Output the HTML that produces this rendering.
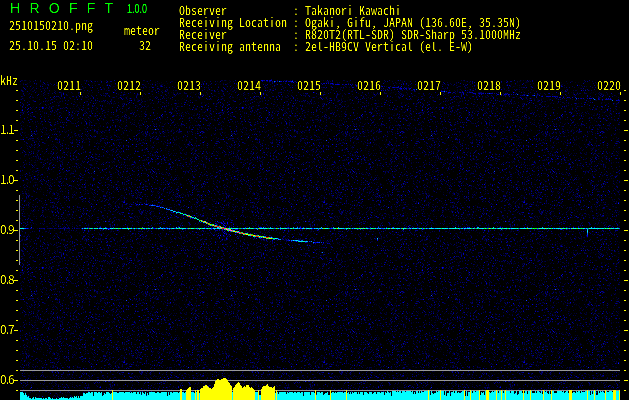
<!DOCTYPE html>
<html><head><meta charset="utf-8"><title>HROFFT 1.0.0</title>
<style>
html,body{margin:0;padding:0;background:#000;overflow:hidden}
#w{position:relative;will-change:transform;width:629px;height:400px;background:#000;overflow:hidden}
.t{position:absolute;white-space:pre;color:#ff0;font:12px/12px "Noto Sans CJK JP",IPAGothic,"Liberation Mono",monospace;font-feature-settings:"hwid";height:12px;-webkit-text-stroke:0}
#tx{position:absolute;left:0;top:0;width:629px;height:400px;filter:url(#cr)}
.f{position:absolute;white-space:pre;color:#ff0;font:12px/12px "Noto Sans CJK JP","Liberation Sans",sans-serif;letter-spacing:-1px;height:12px}
.g{position:absolute;white-space:pre;color:#0f0;font:14px/16px "Liberation Sans",sans-serif;word-spacing:5.4px}
.v{position:absolute;white-space:pre;color:#0f0;font:12.5px/12px "Liberation Sans",sans-serif;transform:scaleX(.72);transform-origin:0 0;-webkit-text-stroke:.35px #0f0}
</style></head><body><div id="w">
<svg width="0" height="0" style="position:absolute"><filter id="cr" x="0" y="0" width="100%" height="100%" color-interpolation-filters="sRGB"><feComponentTransfer><feFuncA type="linear" slope="2" intercept="-.65"/></feComponentTransfer></filter></svg>
<svg width="629" height="400" viewBox="0 0 629 400" shape-rendering="crispEdges" style="position:absolute;left:0;top:0">
<defs><pattern id="nz" x="20" y="80" width="200" height="160" patternUnits="userSpaceOnUse"><g fill="none" stroke-width="1"><path stroke="#000050" d="M1 0.5h1M20 0.5h1M100 0.5h1M123 0.5h1M20 1.5h1M66 1.5h1M128 3.5h1M173 3.5h1M3 4.5h1M6 4.5h1M16 4.5h1M27 4.5h1M87 4.5h1M110 4.5h1M123 4.5h1M190 4.5h1M45 5.5h1M105 5.5h1M135 5.5h1M140 5.5h1M144 5.5h1M52 6.5h1M54 6.5h1M125 6.5h1M137 6.5h1M152 6.5h1M13 7.5h1M45 7.5h1M47 7.5h1M65 7.5h1M70 7.5h1M12 8.5h1M23 8.5h1M25 8.5h1M63 8.5h1M77 8.5h1M88 8.5h1M161 8.5h1M133 9.5h1M24 10.5h1M52 10.5h1M64 10.5h1M78 10.5h1M171 10.5h1M191 10.5h2M3 11.5h1M35 11.5h1M49 11.5h1M132 11.5h1M141 11.5h1M195 11.5h1M198 11.5h1M94 12.5h1M179 12.5h1M9 13.5h1M86 13.5h1M148 13.5h1M159 13.5h2M165 13.5h2M3 14.5h1M11 14.5h1M80 14.5h1M125 14.5h1M132 14.5h1M156 14.5h1M175 14.5h1M23 15.5h1M71 15.5h1M83 15.5h1M103 15.5h1M146 15.5h1M194 15.5h1M56 16.5h1M68 16.5h1M178 16.5h1M94 17.5h1M106 17.5h1M172 17.5h1M34 18.5h1M44 18.5h1M70 18.5h1M19 19.5h1M32 19.5h1M54 19.5h1M75 19.5h1M91 19.5h1M13 20.5h1M114 20.5h1M170 20.5h1M40 21.5h1M67 21.5h1M81 21.5h1M125 21.5h1M111 22.5h1M138 22.5h1M142 22.5h1M164 22.5h1M87 23.5h1M89 23.5h1M133 23.5h1M151 24.5h1M196 24.5h1M3 25.5h1M39 25.5h1M57 25.5h1M155 25.5h1M29 26.5h1M73 26.5h1M162 26.5h1M109 27.5h1M121 27.5h1M11 28.5h1M23 28.5h1M28 28.5h1M42 28.5h1M50 28.5h1M152 28.5h1M10 29.5h1M99 29.5h1M57 31.5h1M71 31.5h1M88 31.5h1M100 31.5h1M121 31.5h1M144 31.5h1M156 31.5h1M0 32.5h1M3 32.5h1M112 32.5h1M151 32.5h1M162 32.5h1M24 33.5h1M65 33.5h1M67 33.5h1M79 33.5h1M168 33.5h1M30 34.5h1M146 34.5h1M34 35.5h1M52 35.5h1M69 35.5h1M75 35.5h1M104 35.5h1M116 35.5h1M134 35.5h1M154 35.5h1M186 35.5h1M28 36.5h1M51 36.5h1M75 36.5h1M163 36.5h1M194 36.5h1M0 37.5h1M7 37.5h1M60 37.5h1M98 37.5h1M105 37.5h1M169 37.5h1M58 38.5h1M109 38.5h1M140 38.5h1M169 38.5h1M184 38.5h1M66 39.5h1M100 39.5h1M154 39.5h1M185 39.5h1M194 39.5h1M49 40.5h1M69 40.5h1M93 40.5h1M106 40.5h1M119 40.5h1M138 40.5h1M2 41.5h1M22 41.5h1M153 41.5h1M176 41.5h1M3 42.5h1M44 42.5h1M69 42.5h1M87 42.5h1M140 42.5h1M153 42.5h1M199 42.5h1M37 43.5h1M61 43.5h1M118 43.5h1M133 43.5h1M151 43.5h1M166 43.5h1M34 44.5h1M114 44.5h1M144 44.5h1M1 45.5h1M30 45.5h1M72 45.5h1M119 45.5h1M175 45.5h1M9 46.5h1M87 46.5h1M105 46.5h1M142 46.5h1M119 47.5h1M169 47.5h1M195 47.5h1M26 48.5h1M102 48.5h1M105 48.5h1M137 48.5h1M1 49.5h1M22 49.5h1M74 49.5h1M126 49.5h1M136 49.5h1M26 50.5h1M48 50.5h1M104 50.5h1M151 50.5h1M157 50.5h1M159 50.5h1M21 51.5h1M76 51.5h1M125 51.5h1M142 51.5h1M183 51.5h1M51 52.5h1M89 52.5h1M103 52.5h1M142 52.5h1M144 52.5h1M158 52.5h2M172 52.5h1M184 52.5h1M0 53.5h1M68 53.5h1M143 53.5h1M0 54.5h1M55 55.5h1M66 55.5h1M139 55.5h1M10 56.5h1M28 56.5h1M37 56.5h1M67 56.5h1M74 56.5h1M114 56.5h1M44 57.5h1M135 57.5h1M9 58.5h1M61 58.5h1M153 58.5h1M21 59.5h1M36 59.5h1M69 59.5h1M80 59.5h1M87 59.5h1M97 59.5h1M136 59.5h1M166 59.5h1M171 59.5h1M12 60.5h1M43 60.5h1M63 60.5h1M94 60.5h1M96 60.5h1M112 60.5h1M180 60.5h1M99 62.5h1M123 62.5h1M145 62.5h1M18 63.5h1M42 63.5h1M87 63.5h1M180 63.5h1M197 63.5h1M118 64.5h1M164 64.5h1M14 65.5h1M100 65.5h1M121 65.5h1M134 65.5h1M35 66.5h1M176 66.5h1M187 67.5h1M0 68.5h1M7 68.5h1M93 69.5h1M122 69.5h1M163 69.5h1M56 70.5h1M87 70.5h1M91 70.5h1M162 70.5h1M171 70.5h1M175 70.5h1M18 71.5h1M193 71.5h1M63 72.5h1M65 72.5h1M95 72.5h1M160 72.5h1M186 72.5h1M30 73.5h1M53 73.5h1M148 73.5h1M161 73.5h1M175 73.5h1M10 74.5h1M89 74.5h1M92 75.5h1M153 75.5h1M18 76.5h1M42 76.5h1M56 76.5h1M78 76.5h1M136 76.5h1M30 77.5h1M97 77.5h1M112 77.5h1M127 77.5h1M172 77.5h1M9 78.5h1M37 78.5h1M103 78.5h1M143 78.5h1M166 78.5h1M170 78.5h1M178 78.5h1M20 79.5h1M27 79.5h1M53 79.5h1M94 79.5h1M105 79.5h1M128 79.5h1M186 79.5h1M30 80.5h1M51 80.5h1M70 80.5h1M144 80.5h2M158 80.5h1M181 80.5h1M41 81.5h1M62 81.5h1M93 81.5h1M135 81.5h1M42 82.5h1M99 82.5h1M139 82.5h1M165 82.5h1M29 83.5h1M115 83.5h1M123 83.5h1M69 84.5h2M103 84.5h1M148 84.5h1M157 84.5h1M169 84.5h1M71 85.5h1M89 85.5h1M94 85.5h1M157 85.5h1M183 85.5h1M23 86.5h1M41 86.5h1M124 86.5h1M174 86.5h1M183 86.5h1M34 87.5h1M105 87.5h1M120 87.5h1M152 87.5h1M26 88.5h1M161 88.5h1M31 89.5h1M96 89.5h1M126 89.5h1M155 89.5h1M175 89.5h1M184 89.5h1M55 90.5h1M97 90.5h1M169 90.5h1M15 91.5h1M89 91.5h1M113 91.5h2M165 91.5h1M168 91.5h1M18 92.5h1M40 92.5h1M89 92.5h1M95 92.5h1M197 92.5h1M52 93.5h1M141 93.5h1M190 93.5h1M5 94.5h1M61 94.5h1M142 94.5h1M9 95.5h1M20 95.5h1M77 95.5h1M117 95.5h1M148 95.5h1M71 96.5h1M119 96.5h1M127 96.5h1M131 96.5h1M190 96.5h1M195 96.5h1M100 97.5h1M105 97.5h1M141 97.5h1M162 97.5h1M11 98.5h1M41 98.5h1M87 98.5h1M133 98.5h1M21 99.5h1M40 99.5h1M60 99.5h1M74 99.5h1M88 99.5h1M107 99.5h1M135 99.5h1M188 99.5h1M52 100.5h1M54 100.5h1M91 100.5h1M109 100.5h1M116 100.5h1M169 101.5h1M178 101.5h1M193 101.5h1M10 102.5h1M34 102.5h1M141 102.5h1M151 102.5h1M199 102.5h1M25 103.5h1M65 103.5h1M137 103.5h1M147 103.5h1M4 104.5h1M72 104.5h1M88 104.5h1M104 104.5h1M106 104.5h1M115 104.5h1M141 104.5h1M160 104.5h1M178 104.5h1M6 105.5h1M91 105.5h1M0 106.5h1M13 106.5h1M29 106.5h1M77 106.5h1M112 106.5h1M123 106.5h1M125 106.5h3M184 106.5h1M197 106.5h1M55 107.5h1M93 107.5h1M96 107.5h1M99 107.5h1M123 107.5h1M139 107.5h1M45 108.5h1M56 108.5h1M60 108.5h1M135 108.5h1M157 108.5h1M194 108.5h1M6 109.5h1M17 109.5h1M19 109.5h1M176 109.5h1M108 110.5h1M143 110.5h1M152 110.5h1M5 111.5h1M82 111.5h2M87 111.5h1M151 111.5h1M179 111.5h1M198 111.5h1M16 112.5h1M36 112.5h1M56 112.5h1M105 112.5h1M120 112.5h1M139 112.5h1M150 112.5h1M158 112.5h1M187 112.5h1M2 113.5h1M5 113.5h1M48 113.5h1M65 113.5h1M113 113.5h1M191 113.5h1M52 114.5h1M73 114.5h1M109 114.5h1M120 114.5h1M132 114.5h1M182 114.5h1M7 115.5h1M84 115.5h1M101 115.5h1M165 115.5h1M171 115.5h1M139 116.5h1M168 116.5h1M80 117.5h1M104 117.5h1M117 117.5h1M119 117.5h1M135 117.5h1M39 118.5h1M106 118.5h1M174 118.5h1M10 119.5h1M79 119.5h1M194 119.5h1M199 119.5h1M82 120.5h1M177 120.5h1M21 121.5h1M65 121.5h1M84 121.5h1M93 121.5h1M102 121.5h1M126 121.5h1M196 121.5h1M8 122.5h1M25 122.5h1M31 122.5h1M87 122.5h1M95 122.5h1M183 122.5h1M185 122.5h1M9 123.5h1M40 123.5h1M107 123.5h1M126 123.5h1M128 123.5h1M6 124.5h1M24 124.5h1M36 124.5h1M72 124.5h1M89 124.5h1M102 124.5h1M109 124.5h1M112 124.5h1M137 124.5h1M6 125.5h1M95 125.5h1M102 125.5h1M118 125.5h1M159 125.5h1M0 126.5h1M12 126.5h1M17 126.5h1M57 126.5h1M90 126.5h1M98 126.5h1M102 126.5h1M175 126.5h1M186 126.5h1M193 126.5h1M13 127.5h1M23 127.5h1M33 127.5h1M48 127.5h1M59 127.5h1M99 127.5h1M131 127.5h1M142 127.5h1M147 127.5h1M149 127.5h1M22 128.5h1M39 128.5h1M53 128.5h1M171 128.5h1M3 129.5h1M163 129.5h1M176 129.5h1M37 130.5h1M118 130.5h1M154 130.5h1M182 130.5h1M197 130.5h1M60 131.5h1M80 131.5h1M122 131.5h1M97 132.5h1M101 132.5h1M119 132.5h1M121 132.5h1M139 132.5h1M121 133.5h1M129 133.5h1M22 134.5h1M111 134.5h1M159 134.5h1M198 134.5h1M56 135.5h1M134 135.5h1M172 135.5h2M133 136.5h1M155 136.5h1M177 136.5h1M181 136.5h3M52 137.5h1M60 137.5h1M94 137.5h2M124 137.5h1M130 137.5h1M163 137.5h1M169 137.5h1M16 138.5h1M64 138.5h1M69 138.5h1M93 138.5h1M113 138.5h1M137 138.5h1M139 138.5h1M187 138.5h1M81 139.5h1M96 139.5h1M105 139.5h1M186 139.5h1M195 139.5h1M31 140.5h1M43 140.5h1M49 140.5h1M60 140.5h1M106 140.5h1M179 140.5h1M36 141.5h1M83 141.5h1M93 141.5h1M117 141.5h1M157 141.5h1M10 142.5h1M127 142.5h1M181 142.5h1M13 143.5h1M29 143.5h1M35 143.5h1M183 143.5h1M36 144.5h1M141 144.5h1M11 145.5h1M35 145.5h1M38 145.5h1M47 145.5h1M68 145.5h1M90 145.5h1M5 146.5h1M40 146.5h1M44 146.5h1M52 146.5h1M57 146.5h1M107 146.5h1M139 146.5h1M149 146.5h1M153 146.5h1M86 147.5h1M161 147.5h1M31 148.5h2M38 148.5h1M100 148.5h1M103 148.5h1M156 148.5h1M24 149.5h1M62 149.5h1M82 149.5h1M118 149.5h1M147 149.5h1M163 149.5h1M168 149.5h1M56 150.5h1M82 150.5h1M158 150.5h1M165 150.5h1M183 150.5h1M26 151.5h1M48 151.5h1M118 151.5h1M120 151.5h1M149 151.5h1M153 151.5h1M185 151.5h1M49 152.5h1M175 152.5h1M178 152.5h1M5 153.5h1M36 153.5h1M115 153.5h1M131 153.5h1M88 154.5h1M115 154.5h1M135 154.5h1M138 154.5h1M177 154.5h1M192 154.5h1M110 155.5h1M189 155.5h1M37 156.5h1M86 156.5h1M119 156.5h1M139 156.5h1M155 156.5h1M92 157.5h1M111 157.5h1M123 157.5h1M140 157.5h1M158 157.5h1M186 157.5h1M7 158.5h1M30 158.5h1M39 158.5h1M76 158.5h1M80 158.5h1M104 158.5h1M24 159.5h1M79 159.5h1M93 159.5h2M151 159.5h1"/><path stroke="#000040" d="M2 0.5h1M4 0.5h2M41 0.5h1M43 0.5h1M64 0.5h1M70 0.5h1M86 0.5h1M124 0.5h1M10 1.5h1M13 1.5h1M60 1.5h1M77 1.5h1M97 1.5h1M110 1.5h1M137 1.5h1M172 1.5h1M27 2.5h1M36 2.5h1M87 2.5h1M119 2.5h1M175 2.5h1M30 3.5h1M36 3.5h1M113 3.5h1M179 3.5h1M22 4.5h1M25 4.5h1M31 4.5h1M50 4.5h1M61 4.5h1M119 4.5h1M20 5.5h1M33 5.5h1M36 5.5h1M72 5.5h1M75 5.5h1M124 5.5h1M161 5.5h1M38 6.5h3M101 7.5h1M111 7.5h1M129 7.5h1M154 7.5h1M188 7.5h1M45 8.5h1M53 8.5h1M20 9.5h1M40 9.5h1M84 9.5h1M99 9.5h1M120 9.5h1M50 10.5h1M89 10.5h1M147 10.5h1M153 10.5h1M155 10.5h2M13 11.5h1M37 11.5h1M99 11.5h1M131 11.5h1M51 12.5h1M58 12.5h2M186 12.5h1M58 13.5h1M83 13.5h1M124 13.5h1M138 13.5h1M164 13.5h1M178 13.5h1M180 13.5h2M86 14.5h1M118 14.5h1M179 14.5h1M47 15.5h1M85 15.5h1M101 15.5h1M116 15.5h2M2 16.5h1M37 16.5h1M96 16.5h1M122 16.5h1M136 16.5h1M12 17.5h2M39 17.5h1M49 17.5h1M66 17.5h1M148 17.5h1M178 17.5h1M198 17.5h1M77 18.5h1M98 18.5h1M103 18.5h1M146 18.5h1M179 18.5h1M36 19.5h1M68 19.5h1M107 19.5h1M114 19.5h1M121 19.5h1M28 20.5h1M30 20.5h1M91 20.5h1M118 20.5h1M121 20.5h1M9 21.5h1M42 21.5h1M54 21.5h1M82 21.5h1M107 21.5h1M117 21.5h1M168 21.5h1M88 22.5h1M98 22.5h1M143 22.5h1M146 22.5h1M68 23.5h1M95 23.5h1M144 23.5h1M161 23.5h1M181 23.5h1M188 23.5h1M197 23.5h1M19 24.5h1M28 24.5h1M54 24.5h1M102 24.5h1M125 24.5h1M167 24.5h1M186 24.5h1M26 25.5h1M146 25.5h1M148 25.5h1M32 26.5h1M56 26.5h1M195 26.5h1M19 27.5h1M21 27.5h1M29 27.5h1M45 27.5h1M76 27.5h1M138 27.5h1M25 28.5h1M118 28.5h1M120 28.5h1M169 28.5h1M176 28.5h1M188 28.5h1M29 29.5h1M59 29.5h1M63 29.5h1M76 29.5h1M106 29.5h1M133 29.5h2M175 29.5h1M1 30.5h1M71 30.5h1M155 30.5h1M158 30.5h1M4 31.5h1M15 31.5h1M20 31.5h1M32 31.5h1M48 31.5h1M52 31.5h1M69 31.5h1M125 31.5h1M179 31.5h1M190 31.5h1M2 32.5h1M24 32.5h1M31 32.5h1M85 32.5h1M37 33.5h1M48 33.5h1M166 33.5h1M177 33.5h1M2 34.5h1M37 34.5h1M51 34.5h1M87 34.5h1M150 34.5h1M10 35.5h1M51 35.5h1M98 35.5h1M126 35.5h1M156 35.5h1M159 35.5h1M173 35.5h1M182 35.5h1M189 35.5h1M199 35.5h1M70 36.5h1M74 36.5h1M96 36.5h1M119 36.5h1M141 36.5h1M24 37.5h1M53 37.5h1M85 37.5h1M91 37.5h1M137 37.5h1M38 38.5h1M81 38.5h1M104 38.5h1M108 38.5h1M172 38.5h1M175 38.5h1M179 38.5h1M34 39.5h1M95 39.5h2M106 39.5h1M112 39.5h1M145 39.5h1M24 40.5h1M121 40.5h1M17 41.5h1M70 41.5h1M100 41.5h1M103 41.5h1M15 42.5h1M57 42.5h1M61 42.5h1M99 42.5h1M106 42.5h1M114 42.5h1M124 42.5h1M0 43.5h1M20 43.5h1M53 43.5h1M69 43.5h1M86 43.5h1M112 43.5h1M122 43.5h1M69 44.5h1M111 44.5h1M113 44.5h1M134 44.5h1M136 44.5h1M199 44.5h1M34 45.5h1M64 45.5h1M69 45.5h1M121 45.5h1M133 45.5h1M158 45.5h1M172 45.5h1M177 45.5h1M188 45.5h2M193 45.5h1M10 46.5h1M41 46.5h1M23 47.5h1M25 47.5h1M71 47.5h1M95 47.5h1M100 47.5h1M156 47.5h1M179 47.5h1M16 48.5h1M142 48.5h1M177 48.5h1M181 48.5h1M195 48.5h1M20 49.5h1M65 49.5h2M78 49.5h1M93 49.5h1M134 49.5h1M177 49.5h2M186 49.5h1M197 49.5h1M199 49.5h1M60 50.5h1M85 50.5h1M88 50.5h1M111 50.5h1M147 50.5h1M37 51.5h1M80 51.5h1M109 51.5h1M139 51.5h1M169 51.5h1M39 52.5h1M45 52.5h1M76 52.5h2M135 52.5h2M154 52.5h1M11 53.5h1M35 53.5h1M103 53.5h1M118 53.5h1M126 53.5h1M129 53.5h1M136 53.5h1M175 53.5h1M195 53.5h1M67 54.5h1M101 54.5h1M127 54.5h1M56 55.5h1M58 55.5h1M107 55.5h1M126 55.5h1M151 55.5h1M47 56.5h1M73 56.5h1M86 56.5h1M91 56.5h1M130 56.5h1M90 57.5h1M99 57.5h1M138 57.5h1M153 57.5h1M186 57.5h1M196 57.5h1M10 58.5h2M27 58.5h1M116 58.5h1M134 58.5h1M158 58.5h1M0 59.5h3M10 59.5h1M18 59.5h1M62 59.5h1M98 59.5h1M100 59.5h1M119 59.5h1M156 59.5h1M13 60.5h1M81 60.5h1M119 60.5h1M125 60.5h1M154 60.5h1M162 60.5h1M166 60.5h1M16 61.5h1M130 61.5h1M37 62.5h1M56 62.5h1M64 62.5h1M84 62.5h1M101 62.5h1M122 62.5h1M138 62.5h1M169 62.5h1M78 63.5h1M99 63.5h1M149 63.5h1M169 63.5h1M175 63.5h1M18 64.5h1M86 64.5h1M93 64.5h2M154 64.5h1M183 64.5h1M12 65.5h1M28 65.5h1M48 65.5h1M59 65.5h1M94 65.5h1M127 65.5h1M146 65.5h1M196 65.5h1M7 66.5h1M33 66.5h1M40 66.5h1M62 66.5h1M75 66.5h1M81 66.5h1M89 66.5h1M110 66.5h1M132 66.5h1M32 67.5h1M61 67.5h1M103 67.5h1M108 67.5h1M161 67.5h1M27 68.5h1M61 68.5h1M173 68.5h1M73 69.5h1M78 69.5h1M178 69.5h1M96 70.5h1M115 70.5h1M153 70.5h1M13 71.5h1M22 71.5h1M70 71.5h1M99 71.5h1M101 71.5h1M131 71.5h1M148 71.5h1M180 71.5h1M13 72.5h1M17 72.5h1M37 72.5h1M47 72.5h1M83 72.5h1M100 72.5h1M124 72.5h1M134 72.5h1M166 72.5h1M172 72.5h1M28 73.5h1M31 73.5h1M42 73.5h1M156 73.5h1M160 73.5h1M164 73.5h1M178 73.5h1M6 74.5h1M8 74.5h1M44 74.5h1M75 74.5h1M98 74.5h1M135 74.5h1M165 74.5h1M176 74.5h1M47 75.5h1M130 75.5h1M133 75.5h1M135 75.5h1M137 75.5h1M155 75.5h1M193 75.5h1M79 76.5h1M81 76.5h1M83 76.5h1M18 77.5h1M73 77.5h1M39 78.5h1M138 78.5h1M158 78.5h1M22 79.5h1M37 79.5h1M54 79.5h1M58 79.5h1M65 79.5h1M77 79.5h1M95 79.5h1M109 79.5h1M124 79.5h1M131 79.5h1M156 79.5h1M188 79.5h1M17 80.5h1M24 80.5h1M122 80.5h3M127 80.5h1M148 80.5h1M77 81.5h1M189 81.5h1M14 82.5h1M20 82.5h1M31 82.5h1M83 82.5h1M92 82.5h1M115 82.5h1M146 82.5h1M186 82.5h1M196 82.5h1M55 83.5h1M82 83.5h1M85 83.5h1M137 83.5h1M171 83.5h1M178 83.5h1M191 83.5h1M56 84.5h2M60 84.5h1M71 84.5h1M126 84.5h1M137 84.5h2M14 85.5h1M58 85.5h1M61 85.5h1M96 85.5h1M107 85.5h1M160 85.5h1M175 85.5h1M0 86.5h1M52 86.5h1M153 86.5h1M185 86.5h1M199 86.5h1M56 87.5h1M77 87.5h1M92 87.5h1M113 87.5h1M117 87.5h1M121 87.5h1M16 88.5h1M109 88.5h1M111 88.5h1M118 88.5h1M149 88.5h1M188 88.5h1M192 88.5h1M28 89.5h2M104 89.5h1M129 89.5h1M135 89.5h1M107 90.5h1M12 91.5h1M44 91.5h1M53 91.5h1M83 91.5h1M135 91.5h1M167 91.5h1M198 91.5h1M43 92.5h1M9 93.5h1M29 93.5h1M51 93.5h1M98 93.5h1M147 93.5h1M7 94.5h1M18 94.5h1M37 94.5h1M50 94.5h1M102 94.5h1M143 94.5h1M145 94.5h1M150 94.5h1M175 94.5h1M0 95.5h1M10 95.5h1M17 95.5h1M99 95.5h1M121 95.5h1M157 95.5h1M182 95.5h1M191 95.5h1M197 95.5h1M15 96.5h1M39 96.5h2M45 96.5h1M91 96.5h1M108 96.5h1M21 97.5h1M24 97.5h1M97 97.5h1M107 97.5h1M187 97.5h1M0 98.5h1M6 98.5h1M91 98.5h1M191 98.5h1M13 99.5h1M62 99.5h1M86 99.5h1M2 100.5h1M80 100.5h1M141 100.5h1M166 100.5h1M10 101.5h1M19 101.5h1M21 101.5h1M38 101.5h2M43 101.5h1M51 101.5h1M107 101.5h1M126 101.5h1M28 102.5h1M60 102.5h1M65 102.5h1M104 102.5h1M149 102.5h1M171 102.5h1M185 102.5h1M196 102.5h1M32 103.5h1M46 103.5h1M80 103.5h1M111 103.5h1M167 103.5h1M170 103.5h1M184 103.5h1M15 104.5h1M59 104.5h1M95 104.5h1M102 104.5h1M129 104.5h1M156 104.5h1M170 104.5h1M176 104.5h1M194 104.5h1M13 105.5h1M28 105.5h1M51 105.5h1M68 105.5h1M89 105.5h1M98 105.5h1M125 105.5h1M181 105.5h1M48 106.5h1M51 106.5h1M53 106.5h1M61 106.5h1M72 106.5h1M176 106.5h1M62 107.5h1M147 107.5h1M172 107.5h1M174 107.5h1M30 108.5h1M51 108.5h1M106 108.5h1M31 109.5h1M39 109.5h1M83 109.5h1M147 109.5h1M157 109.5h1M67 110.5h1M131 110.5h1M199 110.5h1M65 111.5h1M93 111.5h1M133 111.5h1M143 111.5h1M178 111.5h1M197 111.5h1M29 112.5h1M86 112.5h1M119 112.5h1M132 112.5h1M149 112.5h1M167 112.5h1M189 112.5h1M33 113.5h1M37 113.5h1M72 113.5h1M156 113.5h1M23 114.5h1M38 114.5h1M118 114.5h1M124 114.5h1M155 114.5h1M163 114.5h1M167 114.5h1M8 115.5h1M53 115.5h1M55 115.5h1M85 115.5h1M111 115.5h1M148 115.5h1M11 116.5h1M39 116.5h1M52 116.5h1M84 116.5h1M112 116.5h1M117 116.5h1M125 116.5h1M156 116.5h1M182 116.5h1M8 117.5h1M92 117.5h1M115 117.5h1M156 117.5h1M158 117.5h1M31 118.5h1M44 118.5h1M56 118.5h1M64 118.5h1M90 118.5h1M99 118.5h1M126 118.5h1M138 118.5h1M150 118.5h1M176 118.5h1M198 118.5h1M61 119.5h1M166 119.5h1M5 120.5h1M63 120.5h1M69 120.5h1M182 120.5h1M96 121.5h1M103 121.5h1M194 121.5h1M44 122.5h1M141 122.5h1M95 123.5h1M99 123.5h1M140 123.5h2M177 123.5h1M196 123.5h1M13 124.5h1M70 124.5h1M90 124.5h1M99 124.5h1M113 124.5h1M154 124.5h1M192 124.5h1M33 125.5h1M41 125.5h1M97 125.5h1M137 125.5h1M143 125.5h1M30 126.5h1M154 126.5h1M1 127.5h1M43 127.5h1M88 127.5h1M96 127.5h1M107 127.5h1M150 127.5h2M160 127.5h1M176 127.5h1M196 127.5h1M75 128.5h1M146 128.5h1M167 128.5h1M182 128.5h1M184 128.5h1M51 129.5h1M151 129.5h1M11 130.5h1M23 130.5h1M84 130.5h1M89 130.5h1M112 130.5h1M119 130.5h1M139 130.5h1M148 130.5h1M12 131.5h1M31 131.5h1M81 131.5h1M93 131.5h1M98 131.5h1M133 131.5h1M157 131.5h1M194 132.5h1M4 133.5h1M10 133.5h1M111 133.5h1M130 133.5h1M33 134.5h1M47 134.5h1M93 134.5h1M100 134.5h1M168 134.5h1M23 135.5h1M154 135.5h1M71 136.5h1M119 136.5h1M196 136.5h1M30 137.5h1M78 137.5h1M83 137.5h1M112 137.5h1M174 137.5h1M187 137.5h1M0 138.5h1M42 138.5h1M44 138.5h1M84 138.5h1M118 138.5h1M175 138.5h1M177 138.5h1M60 139.5h1M116 139.5h1M126 139.5h1M2 140.5h1M24 140.5h1M59 140.5h1M99 140.5h1M192 140.5h1M32 141.5h1M35 141.5h1M47 141.5h1M76 141.5h1M86 141.5h1M110 141.5h1M0 142.5h1M4 142.5h1M162 142.5h1M169 142.5h1M178 142.5h1M184 142.5h1M186 142.5h1M24 143.5h1M178 143.5h1M68 144.5h1M134 144.5h1M169 144.5h1M185 144.5h1M60 145.5h1M76 145.5h1M103 145.5h1M169 145.5h1M27 146.5h1M91 147.5h1M147 147.5h1M198 147.5h1M23 148.5h1M88 148.5h1M93 148.5h1M128 148.5h1M98 149.5h1M151 149.5h1M190 149.5h1M199 149.5h1M1 150.5h1M49 150.5h1M65 150.5h1M14 151.5h1M25 151.5h1M40 151.5h1M91 151.5h1M181 151.5h1M10 152.5h1M28 152.5h1M79 153.5h1M159 153.5h1M184 153.5h1M187 153.5h2M97 154.5h1M112 154.5h1M172 154.5h1M46 155.5h1M50 155.5h1M182 155.5h1M3 156.5h1M19 156.5h1M33 156.5h1M104 156.5h1M16 157.5h1M18 157.5h1M164 157.5h1M6 158.5h1M65 158.5h1M75 158.5h1M78 158.5h1M93 158.5h1M118 158.5h1M155 158.5h1M182 158.5h1M2 159.5h1M11 159.5h1M41 159.5h1M65 159.5h1M80 159.5h1M82 159.5h1M89 159.5h1M128 159.5h1M155 159.5h1M180 159.5h1"/><path stroke="#000010" d="M6 0.5h1M17 0.5h1M24 0.5h1M65 0.5h1M101 0.5h1M105 0.5h1M116 0.5h1M44 1.5h1M84 1.5h1M129 1.5h1M14 2.5h1M65 2.5h1M158 2.5h1M84 3.5h1M143 3.5h1M104 4.5h1M6 5.5h1M126 6.5h1M64 7.5h1M162 7.5h1M6 8.5h1M9 8.5h1M18 8.5h1M83 8.5h1M114 8.5h1M39 9.5h1M87 9.5h1M157 9.5h1M44 10.5h1M83 11.5h1M175 11.5h1M37 12.5h1M29 13.5h1M98 13.5h1M106 13.5h1M176 13.5h1M87 14.5h1M154 15.5h1M162 15.5h1M20 16.5h1M71 16.5h1M153 16.5h1M155 16.5h1M161 16.5h1M15 17.5h1M19 17.5h1M7 18.5h1M16 18.5h2M83 18.5h1M113 18.5h1M3 19.5h1M104 19.5h1M161 19.5h1M8 20.5h1M47 21.5h1M65 21.5h1M103 21.5h1M134 21.5h1M90 22.5h1M182 22.5h1M60 23.5h1M0 24.5h1M13 24.5h1M109 24.5h1M165 24.5h1M185 24.5h1M110 25.5h1M113 25.5h1M194 25.5h1M22 26.5h1M104 26.5h1M113 27.5h1M142 27.5h1M151 28.5h1M167 28.5h1M40 29.5h1M66 29.5h1M92 29.5h1M132 29.5h1M18 30.5h1M48 30.5h1M107 30.5h1M114 30.5h1M64 31.5h1M76 31.5h1M106 31.5h1M182 31.5h1M195 31.5h1M105 32.5h1M131 32.5h1M182 32.5h1M45 33.5h1M129 33.5h1M0 34.5h1M160 34.5h1M174 34.5h1M176 34.5h1M189 34.5h1M88 35.5h1M144 35.5h1M179 35.5h1M24 36.5h1M37 36.5h1M65 38.5h1M82 38.5h1M142 38.5h1M177 38.5h1M27 39.5h1M78 39.5h1M115 39.5h1M120 39.5h1M135 39.5h1M185 40.5h1M40 41.5h1M130 41.5h1M168 41.5h1M85 42.5h1M177 42.5h1M83 43.5h1M164 44.5h1M16 45.5h1M22 45.5h1M54 45.5h1M166 45.5h1M119 46.5h1M179 46.5h1M190 46.5h1M14 47.5h1M104 47.5h1M162 47.5h1M101 48.5h1M183 48.5h1M190 48.5h1M196 48.5h1M82 50.5h1M118 50.5h1M1 51.5h1M51 51.5h1M84 51.5h1M4 52.5h1M115 52.5h1M149 52.5h1M199 52.5h1M25 54.5h1M107 54.5h1M108 55.5h1M124 55.5h1M116 56.5h1M141 56.5h1M81 57.5h1M87 57.5h1M166 57.5h1M65 59.5h1M196 59.5h1M14 60.5h1M198 60.5h1M5 62.5h1M65 62.5h1M194 62.5h1M23 63.5h1M40 63.5h1M155 63.5h1M174 63.5h1M8 65.5h1M68 65.5h1M156 65.5h1M90 66.5h1M29 68.5h1M94 68.5h1M102 68.5h1M130 68.5h1M146 68.5h1M179 68.5h1M197 68.5h1M44 70.5h1M90 70.5h1M92 72.5h1M169 72.5h1M35 74.5h1M77 74.5h1M86 74.5h1M90 75.5h1M117 75.5h1M124 75.5h1M134 75.5h1M185 75.5h1M157 76.5h1M154 77.5h1M168 77.5h1M187 77.5h1M195 77.5h1M187 78.5h1M28 79.5h1M164 79.5h1M25 80.5h1M92 80.5h1M160 80.5h1M174 80.5h1M28 81.5h1M42 81.5h1M52 82.5h1M74 83.5h1M101 83.5h1M156 83.5h1M188 83.5h1M79 84.5h1M114 84.5h1M22 85.5h1M43 85.5h1M2 86.5h1M63 86.5h1M161 87.5h1M1 88.5h1M112 89.5h1M81 91.5h1M132 91.5h1M166 91.5h1M27 92.5h1M22 93.5h1M25 93.5h1M172 93.5h1M55 94.5h1M171 95.5h1M183 95.5h1M13 96.5h1M41 96.5h1M82 96.5h1M117 97.5h1M169 97.5h1M7 98.5h1M27 98.5h1M77 98.5h1M102 98.5h1M189 98.5h1M41 99.5h1M5 100.5h1M34 100.5h1M97 100.5h1M132 100.5h1M20 101.5h1M87 101.5h1M8 102.5h1M18 102.5h1M38 102.5h1M125 102.5h1M156 102.5h1M126 103.5h1M16 104.5h1M105 105.5h1M149 105.5h1M199 105.5h1M3 108.5h1M21 108.5h1M50 108.5h1M47 109.5h1M70 110.5h1M94 110.5h1M118 110.5h1M175 110.5h1M68 111.5h1M132 111.5h1M192 111.5h1M164 112.5h1M169 112.5h1M183 112.5h1M55 113.5h1M84 114.5h1M117 114.5h1M24 115.5h1M93 115.5h1M103 115.5h1M140 116.5h1M145 116.5h1M69 117.5h1M113 117.5h1M188 117.5h1M58 119.5h1M96 119.5h1M105 119.5h1M125 121.5h1M63 122.5h1M199 122.5h1M7 123.5h1M191 123.5h1M48 124.5h1M160 124.5h1M183 124.5h1M199 124.5h1M61 125.5h1M69 125.5h1M89 125.5h1M181 125.5h1M195 126.5h1M198 127.5h1M11 128.5h1M43 128.5h1M49 128.5h1M151 128.5h1M187 128.5h1M138 130.5h1M172 130.5h1M76 131.5h1M100 131.5h1M18 133.5h1M50 134.5h1M72 134.5h1M95 134.5h1M99 134.5h1M153 134.5h1M193 134.5h1M48 135.5h1M85 135.5h1M188 135.5h1M29 136.5h1M81 136.5h1M94 136.5h1M76 137.5h1M172 137.5h1M10 138.5h1M83 138.5h1M180 138.5h1M2 139.5h1M23 139.5h1M178 139.5h1M130 140.5h1M44 141.5h1M99 141.5h1M183 142.5h1M15 143.5h1M36 143.5h1M40 143.5h1M71 143.5h1M92 143.5h1M44 144.5h1M81 144.5h1M11 146.5h1M48 146.5h1M3 147.5h1M153 147.5h1M181 147.5h1M189 147.5h1M102 148.5h1M120 148.5h1M4 149.5h1M9 149.5h1M189 149.5h1M130 150.5h1M116 151.5h1M180 151.5h1M25 152.5h1M187 152.5h1M18 153.5h1M186 153.5h1M45 154.5h1M64 154.5h1M51 155.5h1M82 155.5h1M133 155.5h1M145 155.5h1M187 155.5h1M132 156.5h1M9 157.5h1M171 157.5h1M182 159.5h1"/><path stroke="#000020" d="M9 0.5h1M67 0.5h1M80 0.5h1M109 0.5h1M177 0.5h1M46 1.5h1M99 1.5h2M107 1.5h1M126 1.5h1M182 1.5h1M9 2.5h1M97 2.5h1M105 2.5h1M107 2.5h1M141 2.5h1M155 2.5h1M199 2.5h1M56 3.5h1M74 3.5h1M118 3.5h1M132 3.5h1M147 3.5h1M196 3.5h1M0 4.5h1M23 4.5h1M56 4.5h1M91 4.5h1M125 4.5h1M141 4.5h1M157 4.5h1M198 4.5h1M11 5.5h1M55 5.5h1M82 5.5h1M97 5.5h1M16 6.5h1M94 6.5h1M110 6.5h1M36 7.5h1M63 7.5h1M83 7.5h1M92 7.5h1M102 7.5h1M120 7.5h1M158 7.5h1M55 8.5h1M120 8.5h1M14 9.5h1M37 9.5h1M129 9.5h1M162 9.5h1M179 9.5h1M132 10.5h1M142 10.5h1M169 10.5h1M16 11.5h1M29 11.5h1M39 11.5h1M92 11.5h1M103 11.5h1M119 11.5h1M144 11.5h1M180 11.5h1M41 12.5h1M48 12.5h1M151 12.5h1M171 12.5h1M173 12.5h1M27 13.5h1M142 13.5h1M170 13.5h1M187 13.5h1M8 14.5h1M21 14.5h1M25 14.5h1M119 14.5h1M192 14.5h1M89 15.5h1M140 15.5h1M149 15.5h1M195 15.5h1M12 16.5h1M107 16.5h1M130 16.5h1M133 16.5h1M176 16.5h1M181 16.5h1M196 16.5h1M17 17.5h1M24 17.5h1M62 17.5h1M65 17.5h1M67 17.5h1M99 17.5h1M101 17.5h1M105 17.5h1M128 17.5h1M166 17.5h1M169 17.5h1M3 18.5h1M27 18.5h1M42 18.5h1M61 18.5h1M114 18.5h1M117 18.5h1M121 18.5h1M123 18.5h1M134 18.5h1M162 18.5h1M117 19.5h2M129 19.5h1M188 19.5h1M190 19.5h1M12 20.5h1M25 20.5h1M42 20.5h1M127 20.5h1M129 20.5h1M158 20.5h1M175 20.5h1M13 21.5h1M39 21.5h1M91 21.5h1M21 22.5h1M59 22.5h1M84 22.5h1M131 22.5h1M184 22.5h1M63 23.5h1M66 23.5h1M93 23.5h2M102 23.5h1M198 23.5h1M48 24.5h1M57 24.5h1M89 24.5h1M93 24.5h1M156 24.5h1M68 25.5h1M116 25.5h1M13 26.5h1M38 26.5h1M85 26.5h1M128 26.5h1M159 26.5h1M164 26.5h1M12 27.5h1M62 27.5h1M126 27.5h1M152 27.5h1M155 27.5h2M184 27.5h1M199 27.5h1M15 28.5h1M32 28.5h1M52 28.5h1M67 28.5h1M100 28.5h1M109 28.5h1M68 29.5h1M82 29.5h1M145 29.5h1M53 30.5h1M56 30.5h1M65 30.5h1M97 30.5h1M106 30.5h1M111 30.5h1M159 30.5h1M174 30.5h1M2 31.5h1M16 31.5h1M31 31.5h1M87 31.5h1M104 31.5h1M154 31.5h1M145 32.5h1M152 32.5h1M183 32.5h1M189 32.5h1M17 33.5h1M156 33.5h1M174 33.5h1M91 34.5h1M121 34.5h1M169 34.5h1M171 34.5h1M24 35.5h1M49 35.5h1M74 35.5h1M76 35.5h1M81 35.5h1M165 35.5h1M174 35.5h1M185 35.5h1M10 36.5h1M71 36.5h1M95 36.5h1M105 36.5h1M112 36.5h1M121 36.5h1M199 36.5h1M50 37.5h1M84 37.5h1M101 37.5h1M171 38.5h1M197 38.5h1M48 39.5h1M64 39.5h1M132 39.5h1M183 39.5h1M192 39.5h1M55 40.5h1M83 40.5h1M101 40.5h1M1 42.5h1M21 42.5h1M43 42.5h1M51 42.5h1M118 42.5h1M147 42.5h1M189 42.5h1M13 43.5h1M51 43.5h1M67 43.5h1M75 43.5h1M142 43.5h1M188 43.5h1M198 43.5h1M15 44.5h1M86 44.5h1M120 44.5h1M97 45.5h1M115 45.5h1M120 45.5h1M161 45.5h1M176 45.5h1M32 46.5h1M43 46.5h1M106 46.5h2M139 46.5h1M141 46.5h1M161 46.5h1M189 46.5h1M1 47.5h1M17 47.5h1M41 47.5h1M78 47.5h1M149 47.5h1M183 47.5h1M191 47.5h1M5 48.5h1M23 48.5h2M38 48.5h1M120 48.5h2M193 48.5h1M15 49.5h1M34 49.5h1M44 49.5h1M50 49.5h1M68 49.5h1M110 49.5h1M143 49.5h1M147 49.5h1M29 50.5h1M69 50.5h1M98 50.5h1M117 50.5h1M44 51.5h1M54 51.5h1M102 51.5h1M179 51.5h1M5 52.5h1M11 52.5h1M25 52.5h1M119 52.5h1M145 52.5h1M153 52.5h1M160 52.5h1M182 52.5h1M4 53.5h1M12 53.5h1M26 53.5h1M28 53.5h1M79 53.5h1M131 53.5h1M161 53.5h1M168 53.5h1M193 53.5h1M8 54.5h1M16 54.5h1M24 54.5h1M59 54.5h1M97 54.5h1M123 54.5h1M144 54.5h1M164 54.5h1M167 54.5h1M191 54.5h1M195 54.5h1M22 55.5h1M60 55.5h1M62 55.5h1M68 55.5h1M74 55.5h1M84 55.5h1M90 55.5h1M123 55.5h1M175 55.5h1M55 56.5h1M87 56.5h1M126 56.5h1M185 56.5h1M18 57.5h1M35 57.5h1M52 57.5h1M57 57.5h1M91 57.5h1M97 57.5h1M103 57.5h1M156 57.5h1M160 57.5h1M184 57.5h1M25 58.5h1M66 58.5h1M131 58.5h1M138 58.5h1M22 59.5h1M50 59.5h1M53 59.5h1M70 59.5h1M101 59.5h1M114 59.5h1M172 59.5h1M26 60.5h1M30 60.5h1M56 60.5h1M58 60.5h1M77 60.5h1M98 60.5h1M115 60.5h1M118 60.5h1M127 60.5h1M152 60.5h1M155 60.5h1M52 61.5h1M57 61.5h1M134 61.5h1M165 61.5h1M36 62.5h1M74 62.5h1M85 62.5h1M159 63.5h1M4 64.5h1M31 64.5h1M59 64.5h1M113 64.5h1M143 64.5h1M11 65.5h1M34 65.5h1M149 65.5h1M158 65.5h1M183 65.5h1M11 66.5h1M83 66.5h1M159 66.5h1M124 67.5h1M146 67.5h1M159 67.5h1M174 67.5h1M183 67.5h1M93 68.5h1M118 68.5h1M132 68.5h1M170 68.5h1M41 69.5h1M77 69.5h1M83 69.5h1M98 69.5h1M132 69.5h1M155 69.5h1M17 70.5h1M27 70.5h1M43 70.5h1M51 70.5h1M55 70.5h1M92 70.5h1M145 70.5h1M159 70.5h1M8 71.5h1M43 71.5h1M48 71.5h1M149 71.5h1M198 71.5h1M25 72.5h1M104 72.5h1M0 73.5h1M16 73.5h1M70 73.5h1M85 73.5h1M166 73.5h1M179 73.5h1M146 74.5h1M191 74.5h1M31 75.5h1M36 75.5h1M38 75.5h1M173 75.5h1M31 76.5h1M53 76.5h1M55 76.5h1M106 76.5h1M179 76.5h1M184 76.5h1M41 77.5h1M87 77.5h2M163 77.5h1M16 78.5h1M52 78.5h1M60 78.5h1M101 78.5h1M126 78.5h1M182 78.5h1M185 78.5h1M25 79.5h1M107 79.5h1M136 79.5h1M165 79.5h1M33 80.5h1M62 80.5h1M109 80.5h1M125 80.5h1M141 80.5h1M147 80.5h1M191 80.5h1M91 81.5h1M94 81.5h1M98 81.5h1M104 81.5h1M112 81.5h1M151 81.5h1M153 81.5h1M179 81.5h1M30 82.5h1M101 82.5h1M118 82.5h1M132 82.5h1M193 82.5h1M67 83.5h1M104 83.5h1M148 83.5h1M161 83.5h1M180 83.5h1M183 83.5h1M24 84.5h1M50 84.5h1M170 84.5h1M180 84.5h1M184 84.5h1M16 85.5h1M87 85.5h1M109 85.5h1M185 85.5h1M3 86.5h1M83 86.5h1M76 87.5h1M88 87.5h1M146 87.5h1M157 87.5h1M183 87.5h1M18 88.5h1M32 88.5h1M95 88.5h1M116 88.5h1M124 88.5h1M54 89.5h1M73 89.5h1M137 89.5h1M13 90.5h1M19 90.5h1M166 90.5h1M33 91.5h1M48 91.5h1M13 92.5h1M24 92.5h1M51 92.5h1M90 92.5h1M97 92.5h1M119 92.5h1M128 92.5h1M142 92.5h1M178 92.5h1M50 93.5h1M106 93.5h1M4 94.5h1M17 94.5h1M56 94.5h1M84 94.5h1M114 94.5h1M135 94.5h2M148 94.5h1M188 94.5h1M22 95.5h1M133 95.5h1M149 95.5h1M196 95.5h1M53 96.5h1M182 96.5h1M27 97.5h1M50 97.5h1M68 97.5h1M72 97.5h1M92 97.5h1M115 97.5h1M137 97.5h1M158 97.5h1M35 98.5h1M37 98.5h1M83 98.5h1M146 98.5h1M159 98.5h1M181 98.5h1M193 98.5h1M15 99.5h1M123 99.5h1M152 99.5h1M8 100.5h1M30 100.5h1M67 100.5h1M178 100.5h1M193 100.5h1M3 101.5h1M89 101.5h1M7 102.5h1M14 102.5h1M26 102.5h1M144 102.5h1M70 103.5h1M148 103.5h1M152 103.5h1M171 103.5h1M182 103.5h1M197 103.5h1M17 104.5h1M85 104.5h1M87 104.5h1M132 104.5h1M140 104.5h1M17 105.5h1M65 105.5h1M99 105.5h1M160 105.5h1M163 105.5h1M175 105.5h1M196 105.5h1M62 106.5h1M88 106.5h1M115 106.5h1M192 106.5h1M5 107.5h1M14 107.5h1M25 107.5h1M106 107.5h1M113 107.5h1M182 107.5h1M134 108.5h1M158 108.5h1M184 108.5h1M4 109.5h1M21 109.5h1M30 109.5h1M51 109.5h1M57 109.5h1M104 109.5h1M119 109.5h1M41 110.5h1M141 110.5h1M157 110.5h1M196 110.5h1M13 111.5h1M20 111.5h1M112 111.5h1M137 111.5h1M185 111.5h1M5 112.5h1M23 112.5h1M27 112.5h1M53 112.5h1M87 112.5h1M94 112.5h1M137 112.5h1M146 112.5h1M56 113.5h1M141 113.5h1M162 113.5h1M9 114.5h1M98 114.5h1M177 114.5h1M3 115.5h1M102 115.5h1M136 115.5h1M139 115.5h1M142 115.5h1M195 115.5h1M75 116.5h1M90 116.5h1M100 116.5h1M104 116.5h1M186 116.5h1M43 117.5h1M47 117.5h1M53 117.5h1M65 117.5h1M95 117.5h1M101 117.5h1M103 117.5h1M118 117.5h1M163 117.5h1M185 117.5h1M21 118.5h2M45 118.5h1M70 118.5h1M83 118.5h1M18 119.5h1M36 119.5h1M55 119.5h1M87 119.5h1M90 119.5h1M101 119.5h1M111 119.5h1M149 119.5h1M152 119.5h1M186 119.5h1M20 120.5h1M192 120.5h1M19 121.5h1M33 121.5h1M80 121.5h1M82 121.5h1M164 121.5h1M176 121.5h1M0 122.5h1M75 122.5h1M78 122.5h1M92 122.5h1M121 122.5h1M170 122.5h1M58 123.5h1M94 123.5h1M158 123.5h1M12 124.5h1M73 124.5h1M172 124.5h1M180 124.5h1M16 125.5h1M23 125.5h1M26 125.5h1M55 125.5h1M115 125.5h1M136 125.5h1M145 125.5h1M182 125.5h1M64 126.5h1M74 126.5h1M101 126.5h1M117 126.5h1M125 126.5h1M192 126.5h1M30 127.5h1M34 127.5h1M73 127.5h1M91 127.5h1M102 127.5h1M118 127.5h1M195 127.5h1M65 128.5h1M79 128.5h1M90 128.5h1M114 128.5h1M120 128.5h1M156 128.5h1M188 128.5h1M1 129.5h1M5 129.5h1M62 129.5h1M97 129.5h1M156 129.5h1M158 129.5h1M15 130.5h1M26 130.5h1M43 130.5h1M73 130.5h1M113 130.5h1M171 130.5h1M196 130.5h1M13 131.5h2M22 131.5h1M29 131.5h1M52 131.5h1M123 131.5h1M132 131.5h1M141 131.5h1M170 131.5h1M63 132.5h1M178 132.5h1M185 132.5h1M198 132.5h1M1 133.5h1M7 133.5h1M49 133.5h1M71 133.5h1M78 133.5h1M100 133.5h1M131 133.5h1M134 133.5h1M143 133.5h1M155 133.5h1M187 133.5h1M190 133.5h1M48 134.5h1M124 134.5h1M162 134.5h1M104 135.5h1M115 135.5h1M125 135.5h1M169 135.5h1M176 135.5h1M186 135.5h1M9 136.5h1M13 136.5h1M48 136.5h1M51 136.5h1M116 136.5h1M8 137.5h1M43 137.5h1M65 137.5h1M70 137.5h1M152 137.5h1M112 138.5h1M157 138.5h1M164 138.5h1M179 138.5h1M114 139.5h1M185 139.5h1M85 140.5h1M89 140.5h1M109 140.5h1M173 140.5h1M40 141.5h1M92 141.5h1M144 141.5h1M34 142.5h1M54 142.5h1M57 142.5h1M105 142.5h1M111 142.5h1M50 143.5h1M68 143.5h1M78 143.5h1M90 143.5h1M108 143.5h1M132 143.5h1M8 144.5h1M11 144.5h1M16 144.5h1M112 144.5h1M114 144.5h1M160 144.5h1M174 144.5h1M49 145.5h1M164 145.5h1M47 146.5h1M68 146.5h1M174 146.5h1M179 146.5h1M90 147.5h1M123 147.5h1M59 148.5h1M82 148.5h1M90 148.5h1M39 149.5h1M49 149.5h1M92 149.5h1M91 150.5h1M95 150.5h2M110 150.5h1M29 151.5h1M55 151.5h1M69 151.5h1M90 151.5h1M150 151.5h2M190 151.5h1M22 152.5h1M39 152.5h1M57 152.5h1M59 152.5h1M68 152.5h1M78 152.5h1M90 152.5h1M142 152.5h1M199 152.5h1M124 153.5h1M155 153.5h1M163 153.5h1M2 154.5h1M68 154.5h2M71 154.5h1M77 154.5h1M140 154.5h1M153 154.5h1M4 155.5h1M37 155.5h1M39 155.5h1M57 155.5h1M80 155.5h1M90 155.5h1M141 155.5h1M160 155.5h1M173 155.5h1M1 156.5h1M35 156.5h1M78 156.5h1M126 156.5h1M144 156.5h1M27 157.5h1M32 157.5h1M96 157.5h1M156 157.5h1M48 158.5h1M101 158.5h1M125 158.5h1M48 159.5h1M55 159.5h1M100 159.5h1M108 159.5h1M161 159.5h1M196 159.5h1"/><path stroke="#000080" d="M15 0.5h1M107 0.5h1M112 0.5h1M52 1.5h1M90 1.5h2M167 1.5h1M184 1.5h1M95 3.5h1M103 3.5h1M5 4.5h1M34 4.5h1M135 4.5h1M195 4.5h1M69 5.5h1M188 5.5h1M10 6.5h1M44 6.5h1M142 6.5h1M164 6.5h1M3 7.5h1M123 7.5h1M184 7.5h1M198 7.5h1M16 8.5h1M137 8.5h1M167 9.5h1M174 9.5h1M177 9.5h1M95 10.5h1M145 10.5h1M163 10.5h1M7 11.5h1M21 11.5h1M15 12.5h1M34 12.5h1M101 12.5h1M85 13.5h1M108 13.5h1M117 14.5h1M145 14.5h1M41 15.5h1M81 15.5h1M141 15.5h1M180 15.5h1M41 16.5h1M53 16.5h1M33 17.5h1M142 18.5h1M190 18.5h1M138 19.5h1M140 19.5h1M4 20.5h1M71 20.5h1M85 20.5h1M119 20.5h1M197 20.5h1M14 21.5h1M23 21.5h1M79 21.5h1M138 21.5h1M91 23.5h1M47 24.5h1M104 24.5h1M119 24.5h1M7 25.5h1M63 25.5h1M80 25.5h1M98 25.5h1M174 25.5h1M72 26.5h1M122 26.5h1M177 26.5h1M196 26.5h1M31 27.5h1M92 27.5h1M31 28.5h1M40 28.5h1M68 28.5h1M81 28.5h1M190 28.5h1M2 29.5h1M181 29.5h1M32 30.5h1M62 30.5h1M30 31.5h1M145 31.5h1M193 31.5h1M7 32.5h1M52 32.5h1M66 32.5h1M91 32.5h1M150 32.5h1M26 33.5h1M54 33.5h1M75 33.5h1M110 33.5h2M157 33.5h1M190 33.5h1M20 34.5h1M63 34.5h1M113 34.5h1M57 35.5h1M106 35.5h1M13 36.5h1M104 36.5h1M147 37.5h1M178 37.5h1M46 38.5h1M62 38.5h1M162 38.5h1M29 39.5h1M47 40.5h1M92 40.5h1M151 40.5h1M132 41.5h1M162 41.5h1M9 42.5h1M42 42.5h1M93 42.5h1M161 43.5h1M178 44.5h1M106 45.5h1M154 45.5h1M164 45.5h1M40 46.5h1M127 47.5h1M173 47.5h1M10 49.5h1M89 50.5h1M16 51.5h1M42 51.5h1M77 51.5h1M160 51.5h2M2 52.5h1M22 52.5h1M133 52.5h1M55 53.5h1M132 53.5h1M15 54.5h1M126 54.5h1M1 55.5h1M12 56.5h1M125 56.5h1M136 56.5h1M82 58.5h1M109 58.5h1M130 58.5h1M8 59.5h1M39 59.5h1M56 59.5h1M116 59.5h1M59 60.5h1M130 60.5h1M39 61.5h1M198 61.5h1M52 62.5h1M89 62.5h1M199 62.5h1M85 63.5h1M15 64.5h1M58 64.5h1M42 65.5h1M122 65.5h1M179 65.5h1M74 66.5h1M103 66.5h1M10 67.5h1M36 67.5h1M133 67.5h1M46 68.5h1M48 68.5h1M127 69.5h1M122 70.5h1M141 70.5h1M26 71.5h1M31 71.5h1M65 71.5h1M175 71.5h1M2 72.5h1M79 74.5h1M96 75.5h1M143 75.5h1M33 77.5h1M146 77.5h1M176 77.5h1M76 78.5h1M186 78.5h1M50 79.5h1M79 79.5h1M150 79.5h1M114 81.5h1M130 81.5h1M132 81.5h1M89 82.5h1M104 82.5h1M56 83.5h1M9 84.5h1M23 84.5h1M113 84.5h1M150 84.5h1M183 84.5h1M40 86.5h1M59 87.5h1M70 87.5h1M101 87.5h1M17 88.5h1M82 89.5h1M138 89.5h1M151 89.5h1M49 90.5h1M199 90.5h1M0 91.5h1M130 92.5h1M136 93.5h1M139 93.5h1M127 94.5h1M180 94.5h1M110 95.5h1M186 95.5h1M27 96.5h1M81 97.5h1M132 97.5h1M174 97.5h1M73 98.5h1M32 99.5h1M128 99.5h1M168 99.5h1M20 100.5h1M24 100.5h1M73 100.5h1M26 101.5h1M85 102.5h1M21 103.5h1M41 103.5h1M108 103.5h1M27 104.5h1M47 104.5h1M74 104.5h1M123 104.5h1M145 104.5h1M181 104.5h1M85 105.5h1M7 106.5h1M31 106.5h1M93 106.5h1M65 107.5h1M87 107.5h1M145 107.5h1M197 107.5h1M29 108.5h1M144 108.5h1M174 108.5h1M72 109.5h1M88 109.5h1M116 109.5h1M156 109.5h1M48 110.5h1M169 111.5h1M91 113.5h1M157 113.5h1M194 113.5h1M34 114.5h1M54 114.5h1M141 114.5h1M48 116.5h1M61 116.5h1M83 116.5h1M144 116.5h1M157 116.5h1M48 118.5h1M84 118.5h1M104 118.5h1M121 118.5h1M86 119.5h1M181 119.5h1M13 120.5h1M77 120.5h1M136 120.5h1M153 120.5h1M163 120.5h1M68 121.5h1M132 121.5h1M142 121.5h1M160 121.5h1M69 122.5h1M106 123.5h1M88 124.5h1M106 124.5h1M122 124.5h1M185 124.5h1M47 126.5h1M53 126.5h1M37 127.5h1M84 128.5h1M108 128.5h1M134 128.5h1M60 129.5h1M96 129.5h1M45 130.5h1M78 130.5h1M109 130.5h1M195 130.5h1M32 131.5h1M37 131.5h1M48 131.5h1M90 131.5h1M53 132.5h1M81 132.5h1M102 132.5h1M196 132.5h1M2 133.5h1M41 134.5h1M63 134.5h1M66 134.5h1M121 134.5h1M192 134.5h1M82 135.5h1M182 135.5h1M4 136.5h1M69 136.5h1M147 136.5h1M157 137.5h1M8 138.5h1M12 140.5h1M89 141.5h1M145 141.5h1M195 141.5h1M62 142.5h1M75 142.5h1M79 142.5h1M118 142.5h1M141 142.5h1M124 143.5h1M42 144.5h1M46 144.5h1M197 144.5h1M6 145.5h1M131 145.5h1M160 145.5h1M197 145.5h1M80 146.5h1M184 147.5h1M173 148.5h1M86 149.5h1M68 150.5h1M80 150.5h1M182 150.5h1M196 150.5h1M19 151.5h1M67 153.5h1M170 153.5h1M81 154.5h1M51 157.5h1M177 157.5h1M117 158.5h1M120 158.5h1M66 159.5h1M140 159.5h1M186 159.5h1"/><path stroke="#000060" d="M44 0.5h1M57 0.5h1M164 0.5h1M47 1.5h1M50 1.5h1M108 1.5h1M127 1.5h1M165 1.5h1M195 1.5h1M52 2.5h1M81 2.5h1M16 3.5h1M28 4.5h1M78 4.5h1M186 4.5h1M62 6.5h1M90 6.5h1M140 6.5h1M37 7.5h1M103 7.5h2M121 7.5h1M146 7.5h1M172 7.5h1M191 7.5h1M94 9.5h1M96 9.5h1M111 9.5h1M139 9.5h1M147 9.5h1M184 9.5h1M197 9.5h1M2 10.5h1M14 10.5h1M29 10.5h1M47 10.5h1M88 10.5h1M122 10.5h1M135 10.5h1M182 10.5h1M194 11.5h1M24 12.5h1M40 12.5h1M60 12.5h2M78 12.5h1M104 12.5h1M110 12.5h1M164 12.5h1M23 13.5h1M32 13.5h1M35 13.5h1M41 14.5h1M103 14.5h1M181 14.5h1M58 15.5h1M67 15.5h1M76 15.5h1M1 16.5h1M52 16.5h1M62 16.5h1M72 16.5h1M85 16.5h1M143 16.5h1M9 17.5h1M137 17.5h1M143 17.5h1M179 17.5h1M2 18.5h1M40 18.5h1M50 18.5h1M106 18.5h1M144 18.5h1M130 19.5h1M187 19.5h1M109 20.5h2M155 20.5h1M25 21.5h1M34 21.5h1M84 21.5h1M87 21.5h1M94 21.5h1M118 21.5h1M122 21.5h1M121 22.5h1M2 23.5h1M20 23.5h1M104 23.5h1M148 23.5h1M154 23.5h1M156 23.5h1M8 24.5h1M53 24.5h1M120 24.5h1M0 25.5h1M115 25.5h1M33 26.5h1M102 26.5h2M146 26.5h1M157 26.5h1M2 27.5h1M26 27.5h1M63 27.5h1M132 27.5h1M182 27.5h1M47 28.5h1M72 28.5h1M38 29.5h1M81 29.5h1M96 29.5h1M176 29.5h1M196 29.5h1M190 30.5h1M36 31.5h1M58 31.5h1M185 31.5h1M11 32.5h1M34 32.5h1M39 32.5h1M165 32.5h1M184 32.5h1M10 33.5h1M64 33.5h1M82 33.5h1M113 33.5h1M124 33.5h1M133 33.5h1M199 33.5h1M126 34.5h1M191 34.5h1M97 35.5h1M80 36.5h1M102 36.5h1M115 36.5h1M142 36.5h1M161 36.5h1M179 36.5h1M106 37.5h1M109 37.5h1M128 38.5h1M180 38.5h1M188 38.5h1M24 39.5h1M39 39.5h1M97 39.5h1M150 39.5h1M98 40.5h1M12 41.5h1M21 41.5h1M28 41.5h1M50 41.5h1M58 41.5h1M35 42.5h1M71 42.5h1M110 42.5h1M22 44.5h1M35 44.5h1M155 44.5h1M162 44.5h2M46 45.5h1M92 45.5h1M139 45.5h1M180 45.5h1M187 45.5h1M90 46.5h1M99 46.5h1M1 48.5h1M35 48.5h1M185 48.5h1M188 48.5h1M132 49.5h1M171 49.5h1M16 50.5h1M75 50.5h1M39 51.5h1M82 51.5h1M151 51.5h1M156 51.5h1M159 51.5h1M167 51.5h1M171 51.5h1M177 51.5h1M84 52.5h1M148 52.5h1M167 52.5h1M77 53.5h1M153 53.5h1M178 53.5h1M182 53.5h1M32 54.5h1M40 54.5h1M48 54.5h1M58 54.5h1M65 54.5h1M194 54.5h1M29 55.5h1M94 55.5h2M129 55.5h1M191 55.5h1M59 56.5h1M133 56.5h1M31 57.5h1M17 58.5h1M85 58.5h1M176 58.5h1M198 58.5h1M123 59.5h1M138 59.5h1M154 59.5h1M121 60.5h1M19 61.5h1M80 61.5h1M141 61.5h1M184 61.5h1M196 61.5h1M6 62.5h1M50 62.5h1M62 62.5h1M133 62.5h1M153 62.5h1M170 62.5h1M182 62.5h1M24 63.5h1M51 63.5h2M147 63.5h1M150 63.5h1M45 64.5h1M57 64.5h1M69 64.5h1M167 64.5h1M106 65.5h1M169 65.5h1M176 65.5h1M194 65.5h1M152 66.5h1M84 67.5h1M77 68.5h1M140 68.5h1M160 68.5h1M63 69.5h1M92 69.5h1M125 69.5h1M137 69.5h1M172 69.5h1M3 70.5h1M18 70.5h1M103 70.5h1M118 71.5h1M186 71.5h1M196 71.5h1M5 72.5h1M43 72.5h1M87 72.5h1M36 73.5h1M50 73.5h1M17 74.5h1M76 74.5h1M132 74.5h1M173 74.5h1M17 75.5h1M69 75.5h1M108 75.5h1M123 75.5h1M132 75.5h1M194 75.5h1M15 76.5h1M37 76.5h1M178 76.5h1M39 77.5h1M70 77.5h1M175 77.5h1M182 77.5h1M18 78.5h1M34 78.5h1M40 78.5h1M195 78.5h1M32 79.5h1M57 79.5h1M73 79.5h1M5 80.5h1M39 80.5h1M37 81.5h1M64 81.5h1M172 81.5h1M9 82.5h1M27 82.5h1M63 82.5h1M129 82.5h1M171 82.5h1M198 82.5h1M30 83.5h1M160 83.5h1M11 84.5h1M40 84.5h1M47 84.5h1M81 84.5h1M101 84.5h1M35 85.5h1M13 86.5h1M114 86.5h1M191 86.5h1M12 87.5h1M22 87.5h1M132 87.5h1M196 87.5h1M72 88.5h1M91 88.5h1M107 88.5h1M125 88.5h1M170 88.5h1M179 88.5h1M84 89.5h1M2 90.5h1M27 90.5h1M48 90.5h1M122 90.5h1M126 90.5h1M176 90.5h1M16 91.5h1M55 91.5h1M130 91.5h1M174 91.5h1M73 92.5h1M80 92.5h1M86 92.5h1M100 92.5h1M146 92.5h1M165 92.5h1M71 93.5h1M109 93.5h1M46 94.5h1M112 94.5h1M85 95.5h1M192 95.5h1M90 96.5h1M0 97.5h1M37 97.5h1M62 97.5h1M151 97.5h1M156 97.5h1M14 98.5h2M44 98.5h1M74 98.5h1M6 99.5h1M36 99.5h1M73 99.5h1M117 99.5h1M156 99.5h1M186 99.5h1M65 100.5h1M180 100.5h1M98 101.5h1M199 101.5h1M121 102.5h1M129 103.5h1M154 103.5h1M193 103.5h1M57 104.5h1M111 104.5h1M3 105.5h1M15 105.5h1M30 105.5h1M43 105.5h1M58 105.5h1M65 106.5h1M119 106.5h1M149 106.5h1M158 106.5h1M20 107.5h1M64 107.5h1M77 107.5h1M97 107.5h1M119 107.5h1M103 108.5h1M110 108.5h1M136 108.5h1M122 109.5h1M150 109.5h1M173 109.5h1M195 109.5h1M27 110.5h1M104 110.5h1M111 110.5h1M193 110.5h1M2 111.5h1M40 111.5h1M42 111.5h1M77 111.5h1M177 111.5h1M118 112.5h1M147 112.5h1M198 112.5h1M3 113.5h1M6 113.5h1M75 113.5h1M86 113.5h1M116 113.5h1M138 113.5h1M149 113.5h1M89 114.5h1M125 114.5h1M153 114.5h1M199 114.5h1M119 115.5h1M168 115.5h1M6 116.5h1M12 116.5h1M127 116.5h1M155 116.5h1M159 116.5h1M52 117.5h1M74 117.5h1M89 117.5h1M181 117.5h1M191 117.5h1M6 118.5h1M16 118.5h1M63 118.5h1M28 119.5h1M38 119.5h1M62 119.5h1M1 120.5h1M4 120.5h1M46 120.5h1M88 120.5h1M134 120.5h1M152 120.5h1M157 120.5h1M117 121.5h1M178 121.5h1M120 122.5h1M139 122.5h1M89 123.5h1M8 124.5h1M105 124.5h1M130 124.5h1M174 124.5h1M184 124.5h1M85 125.5h1M132 125.5h1M33 126.5h1M35 126.5h1M109 126.5h1M141 126.5h1M163 126.5h1M177 126.5h1M25 127.5h1M32 127.5h1M57 127.5h1M66 128.5h1M130 128.5h1M14 129.5h1M25 129.5h1M35 129.5h1M18 130.5h1M58 130.5h1M63 130.5h1M125 130.5h1M129 130.5h1M3 131.5h1M53 131.5h1M69 131.5h1M119 131.5h1M121 131.5h1M131 131.5h1M152 132.5h1M38 133.5h1M43 133.5h1M109 133.5h1M126 133.5h1M164 133.5h1M102 134.5h1M142 134.5h1M33 135.5h1M68 135.5h1M83 135.5h1M162 135.5h1M20 136.5h1M87 136.5h1M165 136.5h1M194 136.5h1M77 137.5h1M173 137.5h1M40 138.5h1M50 138.5h1M127 138.5h1M131 138.5h1M10 139.5h1M67 139.5h1M77 139.5h1M98 139.5h1M102 139.5h1M120 140.5h1M43 141.5h1M158 141.5h1M3 142.5h1M199 142.5h1M20 143.5h1M31 143.5h1M137 143.5h1M161 143.5h1M175 143.5h1M7 144.5h1M23 144.5h1M89 144.5h2M3 145.5h1M56 145.5h1M59 145.5h1M66 145.5h1M92 145.5h1M112 145.5h1M33 146.5h1M186 146.5h1M192 146.5h1M2 147.5h1M54 147.5h1M64 147.5h2M68 147.5h1M128 147.5h1M133 147.5h1M191 147.5h1M99 148.5h1M135 148.5h1M138 148.5h1M196 148.5h1M3 149.5h1M89 149.5h1M126 149.5h1M44 150.5h1M51 150.5h1M53 150.5h1M70 150.5h1M98 150.5h1M143 150.5h1M12 151.5h1M93 151.5h1M119 151.5h1M195 151.5h1M40 152.5h1M159 152.5h1M190 152.5h1M42 153.5h1M94 153.5h1M132 153.5h1M191 153.5h1M79 154.5h1M121 154.5h1M160 154.5h1M174 154.5h1M178 154.5h1M194 154.5h1M34 155.5h1M87 155.5h1M179 155.5h1M194 155.5h1M4 156.5h1M9 156.5h1M51 156.5h1M103 156.5h1M115 156.5h1M122 156.5h1M145 156.5h1M161 156.5h1M63 157.5h1M17 158.5h1M159 158.5h1M7 159.5h1M33 159.5h1M44 159.5h1M62 159.5h1M78 159.5h1M170 159.5h1"/><path stroke="#000070" d="M66 0.5h1M130 0.5h1M169 0.5h1M180 0.5h1M75 1.5h1M112 1.5h1M190 1.5h1M38 2.5h1M150 2.5h1M52 3.5h1M65 3.5h1M191 3.5h1M43 4.5h1M60 4.5h1M79 4.5h1M122 4.5h1M28 5.5h1M46 5.5h1M141 5.5h1M174 5.5h1M7 6.5h1M111 6.5h1M170 6.5h1M27 7.5h1M88 7.5h1M149 7.5h1M175 7.5h1M27 8.5h1M138 8.5h1M180 9.5h1M1 10.5h1M67 10.5h1M71 10.5h1M168 10.5h1M2 11.5h1M116 11.5h1M145 11.5h2M142 12.5h1M3 13.5h1M28 13.5h1M117 13.5h1M128 13.5h1M157 13.5h1M46 14.5h1M104 14.5h1M4 15.5h1M17 15.5h1M88 15.5h1M100 15.5h1M155 15.5h1M36 16.5h1M38 16.5h1M116 16.5h1M170 16.5h1M192 16.5h1M56 17.5h1M93 17.5h1M136 18.5h1M150 18.5h1M1 19.5h1M189 19.5h1M45 20.5h1M48 20.5h1M77 20.5h1M83 20.5h1M7 22.5h1M70 22.5h1M170 22.5h1M45 23.5h1M51 23.5h1M75 23.5h1M108 23.5h1M3 24.5h1M25 24.5h1M38 25.5h1M72 25.5h1M74 25.5h1M82 25.5h1M103 25.5h1M82 26.5h1M161 26.5h1M182 26.5h1M115 27.5h1M77 28.5h1M102 28.5h1M152 29.5h1M83 30.5h1M96 30.5h1M117 30.5h1M82 31.5h1M96 31.5h1M102 32.5h1M114 32.5h1M3 33.5h1M198 33.5h1M57 34.5h1M93 34.5h1M105 34.5h1M177 34.5h1M179 34.5h1M40 35.5h1M84 35.5h1M153 35.5h1M21 36.5h1M15 37.5h1M68 37.5h1M191 37.5h1M160 38.5h1M11 39.5h1M159 39.5h1M78 40.5h1M197 40.5h1M126 41.5h1M29 42.5h2M40 42.5h1M66 42.5h1M55 43.5h1M43 44.5h1M66 44.5h1M161 44.5h1M198 44.5h1M71 45.5h1M150 45.5h1M83 46.5h1M116 46.5h1M125 46.5h1M143 46.5h1M67 47.5h1M166 47.5h1M33 49.5h1M119 50.5h1M74 51.5h1M122 51.5h1M121 52.5h1M125 52.5h1M125 53.5h1M12 54.5h1M117 54.5h1M172 54.5h1M48 55.5h1M165 55.5h1M71 56.5h1M96 56.5h1M144 56.5h1M167 56.5h1M6 57.5h1M50 57.5h1M175 57.5h1M12 58.5h2M68 58.5h1M119 58.5h1M137 58.5h1M37 59.5h1M92 59.5h1M137 59.5h1M4 61.5h1M32 61.5h1M69 61.5h1M117 61.5h1M169 61.5h1M197 61.5h1M23 62.5h1M7 63.5h1M76 63.5h1M120 63.5h1M124 63.5h1M187 63.5h1M195 63.5h1M11 64.5h1M40 64.5h1M187 65.5h1M9 66.5h1M99 66.5h1M1 67.5h1M14 67.5h1M62 67.5h1M96 67.5h1M166 67.5h1M199 67.5h1M42 68.5h1M33 69.5h1M97 69.5h1M108 69.5h1M176 70.5h1M11 71.5h1M55 71.5h1M93 71.5h1M96 71.5h1M33 72.5h1M69 72.5h1M135 72.5h1M11 73.5h1M114 73.5h1M130 73.5h1M174 73.5h1M187 73.5h1M5 74.5h1M32 74.5h1M59 74.5h1M97 74.5h1M50 75.5h1M83 75.5h1M149 75.5h1M197 75.5h1M13 76.5h1M99 76.5h1M118 76.5h1M186 76.5h1M107 77.5h1M161 77.5h1M53 78.5h1M75 78.5h1M189 78.5h1M199 78.5h1M126 79.5h1M163 79.5h1M170 80.5h1M174 81.5h1M182 81.5h1M3 82.5h1M21 82.5h1M145 82.5h1M166 82.5h1M76 83.5h1M141 83.5h1M153 83.5h1M4 84.5h1M29 84.5h1M33 84.5h1M42 84.5h1M181 84.5h1M32 85.5h1M105 85.5h1M120 85.5h1M162 85.5h1M54 86.5h1M56 86.5h1M89 86.5h1M150 86.5h1M171 86.5h1M176 86.5h1M28 87.5h1M64 87.5h1M74 87.5h1M185 87.5h1M134 88.5h1M85 89.5h1M171 89.5h1M0 90.5h1M17 90.5h1M65 90.5h1M67 90.5h1M47 91.5h1M107 91.5h1M186 91.5h1M168 92.5h1M181 92.5h1M53 93.5h1M60 93.5h1M69 93.5h1M132 93.5h1M199 93.5h1M21 94.5h1M90 94.5h2M98 94.5h1M184 94.5h1M59 95.5h1M187 95.5h1M11 97.5h1M83 97.5h1M88 97.5h1M173 97.5h1M46 98.5h1M58 98.5h1M155 98.5h1M7 99.5h1M61 99.5h1M150 99.5h1M60 100.5h1M153 100.5h1M197 100.5h1M57 101.5h1M125 101.5h1M147 101.5h1M172 101.5h2M39 102.5h1M111 102.5h1M143 102.5h1M102 103.5h1M149 103.5h1M22 104.5h1M70 104.5h1M183 104.5h1M185 104.5h1M34 105.5h1M50 105.5h1M82 105.5h1M196 106.5h1M4 107.5h1M151 107.5h1M181 107.5h1M17 108.5h1M140 108.5h1M65 109.5h1M79 109.5h1M100 109.5h1M166 109.5h1M115 110.5h1M14 111.5h1M30 111.5h1M74 112.5h1M89 112.5h1M115 112.5h1M68 113.5h1M109 113.5h1M6 114.5h1M157 114.5h1M170 114.5h1M172 114.5h1M188 114.5h1M9 115.5h1M26 115.5h1M37 115.5h1M83 115.5h1M112 115.5h1M177 115.5h1M46 116.5h1M59 117.5h1M93 117.5h1M151 117.5h1M2 118.5h1M36 118.5h1M69 118.5h1M15 119.5h1M141 119.5h1M148 119.5h1M172 119.5h1M177 119.5h1M19 120.5h1M30 120.5h1M74 120.5h1M85 120.5h1M104 120.5h1M126 120.5h1M160 120.5h1M38 121.5h1M62 121.5h1M81 121.5h1M156 121.5h1M17 122.5h1M30 122.5h1M176 122.5h1M34 123.5h1M71 123.5h1M2 124.5h1M158 124.5h1M8 125.5h1M84 125.5h1M116 125.5h1M164 125.5h1M15 126.5h1M49 126.5h1M111 126.5h1M166 126.5h1M171 126.5h1M42 127.5h1M81 127.5h1M183 127.5h2M183 128.5h1M28 129.5h1M190 129.5h1M22 130.5h1M70 130.5h1M95 130.5h1M123 130.5h1M127 131.5h1M172 131.5h1M22 132.5h1M146 132.5h1M64 133.5h1M87 133.5h1M120 133.5h1M165 133.5h1M183 133.5h1M42 134.5h1M52 134.5h1M92 134.5h1M130 134.5h1M146 134.5h1M150 134.5h1M2 135.5h1M61 135.5h1M23 136.5h1M38 136.5h1M114 136.5h1M25 137.5h1M38 138.5h1M54 138.5h1M90 138.5h1M190 138.5h1M7 139.5h1M89 139.5h1M128 139.5h1M160 139.5h1M94 140.5h1M139 140.5h1M88 141.5h1M112 141.5h1M143 141.5h1M7 142.5h1M125 142.5h1M168 142.5h1M5 143.5h1M143 143.5h1M196 143.5h1M170 144.5h1M94 145.5h1M184 145.5h1M190 145.5h1M77 146.5h1M90 146.5h1M43 147.5h1M79 147.5h1M111 147.5h1M65 148.5h1M67 148.5h1M91 149.5h1M114 149.5h1M124 149.5h1M138 149.5h1M142 149.5h1M114 150.5h1M128 150.5h1M2 151.5h1M127 151.5h1M161 151.5h1M5 152.5h1M169 152.5h1M83 153.5h1M113 153.5h1M140 153.5h1M72 154.5h1M122 154.5h1M146 154.5h1M196 154.5h1M65 155.5h1M166 155.5h1M180 155.5h1M68 156.5h1M6 157.5h1M34 158.5h1M90 158.5h1M191 158.5h1M56 159.5h1M110 159.5h1M181 159.5h1M185 159.5h1"/><path stroke="#000090" d="M94 0.5h1M178 0.5h1M0 1.5h1M81 1.5h1M23 2.5h1M40 3.5h1M163 3.5h1M47 4.5h1M132 4.5h1M181 4.5h1M54 5.5h1M20 6.5h1M22 6.5h1M133 7.5h1M180 7.5h1M163 8.5h1M5 9.5h1M50 9.5h1M55 9.5h1M53 10.5h1M39 12.5h1M87 13.5h1M96 13.5h1M114 13.5h1M129 13.5h1M167 15.5h1M183 15.5h1M10 16.5h1M116 17.5h1M135 17.5h1M31 19.5h1M61 19.5h1M146 20.5h1M166 20.5h1M90 21.5h1M32 22.5h1M172 22.5h1M30 23.5h1M193 23.5h1M169 25.5h1M124 26.5h1M142 26.5h1M5 27.5h1M10 27.5h1M16 27.5h1M46 27.5h1M97 27.5h1M173 27.5h1M108 28.5h1M141 28.5h1M156 28.5h1M37 29.5h1M61 29.5h1M8 31.5h1M8 34.5h1M125 34.5h1M0 35.5h1M77 35.5h1M161 35.5h1M39 36.5h1M152 36.5h2M187 36.5h1M171 37.5h1M4 38.5h1M10 39.5h1M77 39.5h1M83 39.5h1M134 39.5h1M8 40.5h1M48 40.5h1M169 40.5h1M186 40.5h1M37 41.5h1M152 42.5h1M148 43.5h1M190 43.5h1M31 45.5h1M95 45.5h1M127 45.5h1M130 45.5h1M179 45.5h1M16 46.5h1M56 46.5h1M128 46.5h1M136 46.5h1M90 47.5h1M30 49.5h1M89 49.5h1M31 50.5h1M74 50.5h1M106 50.5h1M195 50.5h1M127 51.5h1M181 51.5h1M183 52.5h1M62 53.5h1M34 54.5h1M179 55.5h2M163 56.5h1M132 57.5h1M182 57.5h1M36 58.5h1M83 58.5h1M114 58.5h1M150 59.5h1M147 60.5h1M22 62.5h1M39 62.5h1M108 62.5h1M196 63.5h1M103 65.5h1M147 65.5h1M106 69.5h1M117 71.5h1M128 71.5h1M136 71.5h1M70 72.5h1M61 73.5h1M20 74.5h1M46 74.5h1M72 74.5h1M53 75.5h1M125 75.5h1M50 76.5h1M56 77.5h1M121 77.5h1M128 77.5h1M171 79.5h1M98 80.5h1M119 80.5h1M155 80.5h1M68 81.5h1M48 82.5h1M114 82.5h1M128 82.5h1M138 83.5h1M112 84.5h1M149 84.5h1M166 84.5h1M123 85.5h1M163 86.5h1M40 88.5h1M66 88.5h1M68 89.5h1M131 89.5h1M39 90.5h1M132 90.5h1M65 91.5h1M98 91.5h1M103 91.5h1M106 91.5h1M163 91.5h1M196 92.5h1M39 93.5h1M74 93.5h1M22 94.5h1M64 94.5h1M54 96.5h1M173 96.5h1M179 96.5h1M196 96.5h1M195 97.5h1M111 98.5h1M23 99.5h1M154 99.5h1M119 100.5h1M128 100.5h1M145 100.5h1M106 101.5h1M91 102.5h1M134 102.5h1M120 104.5h1M38 105.5h1M41 105.5h1M177 105.5h1M131 106.5h1M174 106.5h1M78 107.5h1M109 107.5h1M117 107.5h1M122 107.5h1M59 108.5h1M96 108.5h1M139 109.5h1M125 110.5h1M172 110.5h1M98 111.5h1M111 111.5h1M48 112.5h1M153 112.5h1M34 113.5h1M111 113.5h1M106 114.5h1M131 115.5h1M122 116.5h1M6 117.5h1M46 117.5h1M60 117.5h1M160 117.5h1M98 119.5h1M183 119.5h1M49 120.5h1M169 121.5h1M37 122.5h1M160 122.5h1M177 122.5h1M198 122.5h1M195 123.5h1M4 125.5h1M179 125.5h1M22 127.5h1M49 127.5h1M98 127.5h1M37 128.5h1M74 129.5h1M161 129.5h1M189 129.5h1M43 132.5h1M130 132.5h1M62 133.5h1M99 133.5h1M176 133.5h1M180 134.5h1M196 135.5h1M41 136.5h1M109 136.5h1M192 136.5h1M111 137.5h1M140 137.5h1M150 137.5h1M158 137.5h1M173 138.5h1M5 139.5h1M78 139.5h1M142 139.5h1M11 140.5h1M131 140.5h1M24 141.5h1M77 142.5h1M144 143.5h1M169 143.5h1M150 144.5h1M48 147.5h1M67 147.5h1M10 148.5h1M130 148.5h1M74 150.5h1M195 150.5h1M197 150.5h1M131 151.5h1M183 151.5h1M118 153.5h1M146 153.5h1M148 154.5h1M152 154.5h1M7 156.5h1M63 156.5h2M125 156.5h1M197 156.5h1M18 158.5h1M62 158.5h1M135 158.5h1"/><path stroke="#000030" d="M103 0.5h1M68 1.5h1M74 1.5h1M106 1.5h1M146 1.5h1M151 1.5h2M197 1.5h1M49 2.5h1M72 2.5h1M106 2.5h1M117 2.5h1M135 2.5h1M164 2.5h1M182 2.5h1M3 3.5h1M7 3.5h1M117 3.5h1M137 3.5h1M139 3.5h1M176 3.5h1M45 4.5h1M95 4.5h1M130 4.5h1M142 4.5h1M86 5.5h1M90 5.5h1M99 5.5h1M159 5.5h1M93 6.5h1M131 6.5h1M162 6.5h1M166 6.5h1M198 6.5h1M99 7.5h1M126 7.5h1M144 7.5h1M186 7.5h1M22 8.5h1M84 8.5h1M105 8.5h1M117 8.5h1M123 8.5h1M160 8.5h1M188 8.5h1M1 9.5h1M11 9.5h1M24 9.5h1M49 9.5h1M80 9.5h1M97 9.5h1M102 9.5h1M137 9.5h1M146 9.5h1M165 9.5h1M10 10.5h1M34 10.5h1M37 10.5h1M41 10.5h1M86 10.5h1M108 10.5h1M113 10.5h1M187 10.5h1M12 11.5h1M25 11.5h1M69 11.5h1M43 12.5h1M63 12.5h1M72 12.5h1M148 12.5h1M153 12.5h1M157 12.5h1M41 13.5h1M52 13.5h1M68 13.5h1M120 13.5h1M153 13.5h1M198 13.5h2M24 14.5h1M98 14.5h1M105 14.5h1M153 14.5h1M158 14.5h1M182 14.5h2M187 14.5h1M28 15.5h1M46 15.5h1M84 15.5h1M122 15.5h1M185 15.5h1M65 16.5h1M154 16.5h1M35 17.5h1M92 17.5h1M180 17.5h1M10 18.5h1M109 18.5h1M111 18.5h1M0 19.5h1M152 19.5h1M164 19.5h1M191 19.5h1M26 20.5h1M84 20.5h1M176 20.5h1M27 21.5h1M66 21.5h1M73 21.5h1M124 21.5h1M140 21.5h1M199 21.5h1M37 22.5h1M39 22.5h1M55 22.5h1M76 22.5h1M91 22.5h1M148 22.5h1M181 22.5h1M38 23.5h1M103 23.5h1M120 23.5h1M130 23.5h1M137 23.5h1M158 23.5h1M194 23.5h1M196 23.5h1M140 24.5h1M193 24.5h1M36 25.5h1M60 25.5h1M67 25.5h1M106 25.5h1M121 25.5h1M128 25.5h1M53 26.5h1M99 26.5h1M117 26.5h1M127 26.5h1M158 26.5h1M43 27.5h1M58 27.5h1M144 27.5h1M179 27.5h1M41 28.5h1M44 28.5h1M54 28.5h1M59 28.5h1M145 28.5h1M175 28.5h1M195 28.5h1M14 29.5h1M88 29.5h1M126 29.5h1M149 29.5h1M170 29.5h1M186 29.5h1M35 30.5h1M37 30.5h1M73 30.5h1M84 30.5h1M22 31.5h1M43 31.5h1M55 31.5h1M65 31.5h1M77 31.5h1M150 31.5h1M167 31.5h1M1 32.5h1M26 32.5h1M40 32.5h1M48 32.5h1M71 32.5h1M84 32.5h1M125 32.5h1M199 32.5h1M41 33.5h1M137 33.5h1M159 33.5h1M161 33.5h1M191 33.5h1M12 34.5h1M28 34.5h1M118 34.5h1M163 34.5h1M48 35.5h1M66 35.5h1M176 35.5h1M11 36.5h1M84 36.5h1M108 36.5h1M124 36.5h1M45 37.5h1M76 37.5h1M90 37.5h1M142 37.5h1M69 38.5h1M123 38.5h1M168 38.5h1M178 38.5h1M4 39.5h1M92 39.5h1M125 39.5h1M140 39.5h1M147 39.5h1M191 39.5h1M41 40.5h1M64 40.5h1M73 40.5h1M90 40.5h1M114 40.5h1M174 40.5h1M187 40.5h1M194 40.5h2M15 41.5h1M97 41.5h1M124 41.5h1M170 42.5h1M18 43.5h1M38 43.5h1M52 43.5h1M76 43.5h1M79 43.5h1M88 43.5h1M136 43.5h1M145 43.5h1M157 43.5h1M101 44.5h1M189 44.5h1M7 45.5h1M56 45.5h1M80 45.5h1M160 45.5h1M170 45.5h1M178 45.5h1M3 46.5h1M80 46.5h1M169 46.5h1M86 47.5h1M154 47.5h1M181 47.5h1M64 48.5h1M126 48.5h2M130 48.5h1M159 48.5h1M169 48.5h1M0 49.5h1M2 49.5h1M35 49.5h1M72 49.5h1M142 49.5h1M152 49.5h1M189 49.5h1M59 50.5h1M86 50.5h1M99 50.5h1M145 50.5h1M148 50.5h1M153 50.5h1M187 50.5h1M34 51.5h1M46 51.5h1M65 51.5h1M83 51.5h1M133 51.5h1M150 51.5h1M158 51.5h1M94 52.5h1M139 52.5h1M13 53.5h1M17 53.5h1M54 53.5h1M82 53.5h1M119 53.5h1M123 53.5h1M26 54.5h2M54 54.5h1M61 54.5h1M94 54.5h1M122 54.5h1M129 54.5h1M5 55.5h1M39 55.5h1M81 55.5h1M148 55.5h1M52 56.5h1M80 56.5h1M98 56.5h1M113 56.5h1M140 56.5h1M143 56.5h1M146 56.5h1M156 56.5h1M3 57.5h1M7 57.5h1M72 57.5h1M74 57.5h1M163 57.5h1M35 58.5h1M49 58.5h1M63 58.5h1M81 58.5h1M86 58.5h1M125 58.5h1M135 58.5h1M193 58.5h1M66 59.5h1M99 59.5h1M147 59.5h1M197 59.5h1M37 60.5h1M39 60.5h1M52 60.5h1M57 60.5h1M80 60.5h1M84 60.5h1M103 60.5h1M176 60.5h1M14 61.5h1M144 61.5h1M176 61.5h1M51 62.5h1M69 62.5h1M77 62.5h1M147 62.5h1M6 63.5h1M25 63.5h1M38 63.5h1M79 63.5h1M119 63.5h1M133 63.5h1M136 63.5h1M143 63.5h1M148 63.5h1M168 63.5h1M14 64.5h1M33 64.5h1M156 64.5h1M188 64.5h1M6 65.5h1M41 65.5h1M62 65.5h1M69 65.5h1M85 65.5h1M107 65.5h2M130 65.5h1M168 65.5h1M174 65.5h1M186 65.5h1M18 66.5h1M42 66.5h1M60 66.5h1M78 66.5h1M115 66.5h1M165 66.5h1M167 66.5h1M17 67.5h1M46 67.5h1M54 67.5h1M78 67.5h1M127 67.5h1M131 67.5h2M173 67.5h1M193 67.5h1M198 67.5h1M21 68.5h1M37 68.5h1M114 68.5h1M145 68.5h1M171 68.5h2M181 68.5h1M8 69.5h1M14 69.5h1M32 69.5h1M37 69.5h1M59 69.5h1M70 69.5h1M124 69.5h1M149 69.5h1M175 69.5h1M185 69.5h1M194 69.5h1M19 70.5h1M84 70.5h1M121 70.5h1M88 71.5h1M127 71.5h1M140 71.5h1M50 72.5h1M189 72.5h1M197 72.5h1M24 73.5h1M75 73.5h1M98 73.5h1M128 73.5h1M151 73.5h1M154 73.5h1M183 73.5h1M191 73.5h1M198 73.5h1M92 74.5h1M101 74.5h1M110 74.5h1M129 74.5h1M150 74.5h1M166 74.5h1M181 74.5h1M4 75.5h1M8 75.5h1M184 75.5h1M196 75.5h1M4 76.5h1M16 76.5h1M23 76.5h1M39 76.5h1M75 76.5h1M144 76.5h1M160 76.5h1M175 76.5h1M11 77.5h1M16 77.5h1M20 77.5h1M35 77.5h1M42 77.5h1M65 77.5h1M134 77.5h1M185 77.5h1M0 78.5h1M27 78.5h1M64 78.5h1M110 78.5h1M142 78.5h1M150 78.5h1M19 79.5h1M21 79.5h1M35 79.5h1M43 79.5h1M78 79.5h1M135 79.5h1M11 80.5h1M15 80.5h1M42 80.5h1M56 80.5h1M72 80.5h1M75 80.5h1M130 80.5h1M40 81.5h1M76 81.5h1M87 81.5h1M141 81.5h1M170 81.5h2M15 82.5h1M23 82.5h1M88 82.5h1M94 82.5h1M113 82.5h1M191 82.5h1M6 83.5h1M42 83.5h1M58 83.5h1M61 83.5h1M143 83.5h1M169 83.5h1M6 84.5h1M15 84.5h1M98 84.5h1M111 84.5h1M128 84.5h1M163 84.5h1M3 85.5h1M24 85.5h1M70 85.5h1M72 85.5h1M97 85.5h1M100 85.5h1M111 85.5h1M129 85.5h1M159 85.5h1M29 86.5h1M104 86.5h1M118 86.5h1M140 86.5h1M167 86.5h2M14 87.5h1M38 87.5h1M47 88.5h1M51 88.5h1M57 88.5h1M74 88.5h1M120 88.5h1M174 88.5h1M10 89.5h1M128 89.5h1M197 89.5h1M18 90.5h1M74 90.5h1M79 90.5h1M98 90.5h1M148 90.5h1M139 91.5h1M155 91.5h1M164 91.5h1M175 91.5h1M193 91.5h1M9 92.5h1M103 92.5h1M136 92.5h1M187 92.5h1M93 93.5h1M100 93.5h1M118 93.5h1M123 93.5h3M165 93.5h1M170 93.5h1M185 93.5h1M12 94.5h1M131 94.5h1M164 94.5h1M172 94.5h1M2 95.5h1M62 95.5h2M155 95.5h1M172 95.5h1M128 96.5h1M151 96.5h1M194 96.5h1M18 97.5h1M63 97.5h1M70 97.5h1M154 97.5h1M17 98.5h1M30 98.5h1M49 98.5h1M56 98.5h1M109 98.5h1M87 99.5h1M104 99.5h1M114 99.5h1M158 99.5h1M12 100.5h1M79 100.5h1M124 100.5h1M22 101.5h1M97 101.5h1M146 101.5h1M15 102.5h2M30 102.5h1M42 102.5h1M81 102.5h1M94 102.5h1M97 102.5h1M157 102.5h1M170 102.5h1M186 102.5h1M7 103.5h1M104 103.5h1M160 103.5h1M30 104.5h1M89 104.5h1M114 104.5h1M143 104.5h1M161 104.5h1M45 105.5h1M174 105.5h1M103 106.5h1M148 106.5h1M188 106.5h1M9 107.5h1M91 107.5h1M70 108.5h2M126 108.5h1M145 108.5h1M177 108.5h1M75 109.5h1M95 109.5h1M130 109.5h1M153 109.5h1M178 109.5h1M8 110.5h1M13 110.5h1M37 110.5h1M63 110.5h1M81 110.5h1M96 110.5h1M45 111.5h1M54 111.5h1M118 111.5h1M138 111.5h1M149 111.5h1M156 111.5h1M33 112.5h1M71 112.5h1M8 113.5h1M29 113.5h1M32 113.5h1M38 113.5h1M67 113.5h1M120 113.5h1M142 113.5h1M0 114.5h1M33 114.5h1M42 114.5h1M48 114.5h1M61 114.5h1M64 114.5h1M161 114.5h1M168 114.5h1M184 114.5h1M195 114.5h1M32 115.5h1M87 115.5h1M117 115.5h1M152 115.5h1M154 115.5h1M158 115.5h1M160 115.5h1M179 115.5h2M73 116.5h1M165 116.5h1M179 116.5h1M30 117.5h1M37 117.5h1M112 117.5h1M179 117.5h1M189 117.5h1M17 118.5h1M34 118.5h1M60 118.5h1M89 118.5h1M152 118.5h1M155 118.5h1M48 119.5h1M72 119.5h2M89 119.5h1M121 119.5h1M128 119.5h1M192 119.5h1M97 120.5h1M140 120.5h1M101 121.5h1M193 121.5h1M10 122.5h1M33 122.5h2M117 122.5h1M119 122.5h1M126 122.5h1M181 122.5h1M196 122.5h1M22 123.5h1M110 123.5h1M27 124.5h1M45 124.5h1M104 124.5h1M116 124.5h1M134 124.5h1M150 124.5h1M168 124.5h1M176 124.5h1M188 124.5h1M32 125.5h1M91 125.5h1M156 125.5h1M9 126.5h1M21 126.5h1M36 126.5h1M73 126.5h1M136 126.5h1M161 126.5h1M187 126.5h1M8 127.5h1M15 127.5h1M58 127.5h1M60 127.5h1M71 127.5h1M170 127.5h2M19 128.5h1M71 128.5h1M104 128.5h1M109 128.5h1M138 128.5h1M149 128.5h1M2 129.5h1M56 129.5h1M64 129.5h1M149 129.5h1M179 129.5h1M1 130.5h1M31 130.5h1M66 130.5h1M85 130.5h1M88 130.5h1M165 130.5h1M176 130.5h1M23 131.5h1M33 131.5h1M55 131.5h1M63 131.5h1M73 131.5h1M94 131.5h1M147 131.5h1M150 131.5h1M192 131.5h1M195 131.5h1M199 131.5h1M90 132.5h1M108 132.5h1M125 132.5h1M122 133.5h1M160 133.5h1M177 133.5h1M13 134.5h1M74 134.5h1M166 134.5h1M8 135.5h2M47 135.5h1M52 135.5h1M126 135.5h1M161 135.5h1M178 135.5h1M180 135.5h1M3 136.5h1M5 136.5h1M14 136.5h1M16 136.5h1M27 136.5h1M35 136.5h1M82 136.5h1M117 136.5h1M135 136.5h2M138 136.5h1M46 137.5h1M87 137.5h1M115 137.5h1M117 137.5h1M126 137.5h1M151 137.5h1M154 137.5h1M161 137.5h1M34 138.5h1M71 138.5h1M110 138.5h1M99 139.5h1M108 139.5h1M145 139.5h1M147 139.5h1M176 139.5h1M191 139.5h1M118 140.5h1M188 140.5h1M7 141.5h1M116 141.5h1M153 141.5h1M155 141.5h1M12 142.5h1M32 142.5h1M52 142.5h1M73 142.5h1M140 142.5h1M147 142.5h1M159 142.5h1M22 143.5h1M135 143.5h1M38 144.5h1M52 144.5h1M97 144.5h1M118 144.5h1M177 144.5h1M194 144.5h1M32 145.5h1M97 145.5h1M107 145.5h1M123 145.5h1M26 146.5h1M92 146.5h1M130 146.5h1M160 146.5h1M199 146.5h1M69 147.5h1M139 147.5h1M155 147.5h1M177 147.5h1M185 147.5h1M17 148.5h1M22 148.5h1M27 148.5h1M39 148.5h1M69 148.5h1M89 148.5h1M111 148.5h1M113 148.5h1M115 148.5h1M152 148.5h1M193 148.5h1M119 149.5h1M149 149.5h1M165 149.5h1M187 149.5h1M29 150.5h1M34 150.5h1M46 150.5h1M62 150.5h1M85 150.5h1M64 151.5h1M99 151.5h1M109 151.5h1M173 151.5h1M45 152.5h1M47 152.5h1M98 152.5h1M124 152.5h1M194 152.5h1M35 153.5h1M59 153.5h1M74 153.5h1M108 153.5h1M0 154.5h1M8 154.5h1M16 154.5h1M37 154.5h1M80 154.5h1M104 154.5h1M111 154.5h1M119 154.5h1M167 154.5h1M8 155.5h1M19 155.5h1M61 155.5h1M107 155.5h1M138 155.5h1M123 156.5h1M166 156.5h1M69 157.5h1M91 157.5h1M150 157.5h1M161 157.5h1M163 157.5h1M167 157.5h1M176 157.5h1M50 158.5h1M67 158.5h1M95 158.5h1M122 158.5h1M126 158.5h1M129 158.5h1M141 158.5h1M150 158.5h1M160 158.5h2M195 158.5h1M4 159.5h1M42 159.5h2M83 159.5h1M184 159.5h1M189 159.5h1"/><path stroke="#0000d0" d="M71 1.5h1M157 5.5h1M43 13.5h1M182 16.5h1M44 17.5h1M111 20.5h1M64 22.5h1M8 28.5h1M22 28.5h1M187 29.5h1M12 32.5h1M66 43.5h1M172 49.5h1M91 59.5h1M59 62.5h1M150 62.5h1M171 64.5h1M126 68.5h1M40 70.5h1M66 76.5h1M131 78.5h1M137 78.5h1M128 83.5h1M72 105.5h1M172 105.5h1M132 108.5h1M158 110.5h1M189 111.5h1M172 112.5h1M181 115.5h1M185 115.5h1M65 118.5h1M142 119.5h1M108 133.5h1M156 136.5h1M1 143.5h1M94 144.5h1M158 147.5h1M182 154.5h1M73 156.5h1M68 159.5h1"/><path stroke="#0000a0" d="M87 1.5h1M54 2.5h1M86 2.5h1M14 3.5h1M183 3.5h1M186 3.5h1M57 4.5h1M102 4.5h1M183 4.5h1M106 7.5h1M112 7.5h1M61 9.5h1M189 9.5h1M194 10.5h1M138 11.5h1M178 11.5h1M136 12.5h1M191 13.5h1M18 14.5h1M89 16.5h1M167 16.5h1M30 17.5h1M73 17.5h1M25 18.5h1M73 18.5h1M186 18.5h1M102 19.5h1M198 19.5h1M75 20.5h1M132 20.5h1M15 21.5h1M165 22.5h1M198 22.5h1M73 23.5h1M113 23.5h1M155 23.5h1M9 24.5h1M68 24.5h1M2 26.5h1M144 26.5h1M188 26.5h1M19 29.5h1M93 32.5h1M133 32.5h1M149 32.5h1M58 33.5h1M49 34.5h1M14 36.5h1M125 36.5h1M79 38.5h1M136 38.5h1M198 38.5h1M46 39.5h1M65 41.5h1M46 42.5h1M30 44.5h1M58 45.5h1M95 46.5h1M98 49.5h1M138 49.5h1M70 50.5h1M182 51.5h1M81 52.5h1M127 52.5h1M14 53.5h1M140 53.5h1M177 53.5h1M61 56.5h1M35 59.5h1M191 60.5h1M62 61.5h1M116 64.5h1M91 65.5h1M178 65.5h1M57 66.5h1M108 66.5h1M26 69.5h1M4 71.5h1M183 71.5h1M9 72.5h1M44 72.5h1M54 72.5h1M13 73.5h1M33 73.5h1M192 73.5h1M177 75.5h1M138 76.5h1M191 76.5h1M100 77.5h1M20 78.5h1M175 78.5h1M104 79.5h1M141 79.5h1M176 79.5h1M159 80.5h1M86 82.5h1M25 83.5h1M12 85.5h1M40 85.5h1M177 85.5h1M4 87.5h1M49 87.5h1M150 87.5h1M28 88.5h1M43 88.5h1M146 89.5h1M118 90.5h1M134 92.5h1M6 93.5h1M149 93.5h1M118 94.5h1M5 96.5h1M60 96.5h1M102 96.5h1M143 98.5h1M17 99.5h1M46 99.5h1M108 100.5h1M40 101.5h1M102 102.5h1M79 103.5h1M62 104.5h1M39 106.5h1M182 106.5h1M40 108.5h1M106 109.5h1M123 109.5h1M143 109.5h1M131 111.5h1M60 112.5h1M77 114.5h1M178 114.5h1M113 115.5h1M8 116.5h1M44 116.5h1M62 116.5h1M85 116.5h1M116 118.5h1M25 120.5h1M158 120.5h1M181 120.5h1M4 121.5h1M104 121.5h1M32 122.5h1M113 122.5h1M138 122.5h1M26 124.5h1M111 124.5h1M159 124.5h1M95 126.5h1M3 127.5h1M93 128.5h1M106 128.5h1M13 130.5h1M32 132.5h1M38 132.5h1M122 132.5h1M151 132.5h1M112 133.5h1M49 134.5h1M21 135.5h1M61 136.5h1M163 138.5h1M92 142.5h1M128 142.5h1M65 143.5h1M74 143.5h1M189 145.5h1M38 146.5h1M158 146.5h1M143 147.5h1M193 147.5h1M44 149.5h1M189 150.5h1M68 151.5h1M122 151.5h1M163 151.5h1M172 151.5h1M63 152.5h1M112 153.5h1M81 155.5h1M126 155.5h1M101 157.5h1M85 158.5h1M154 158.5h1"/><path stroke="#0000b0" d="M24 3.5h1M89 5.5h1M141 6.5h1M72 7.5h1M80 7.5h1M4 8.5h1M165 10.5h1M43 14.5h1M61 14.5h1M154 14.5h1M189 16.5h1M100 17.5h1M152 17.5h1M110 18.5h1M57 19.5h1M0 22.5h1M109 22.5h1M106 24.5h1M181 26.5h1M23 27.5h1M7 29.5h1M187 30.5h1M72 33.5h1M151 33.5h1M196 33.5h1M63 35.5h1M130 35.5h1M52 38.5h1M183 38.5h1M183 44.5h1M74 45.5h1M87 47.5h1M67 51.5h1M36 54.5h1M70 55.5h1M75 56.5h1M14 62.5h1M87 62.5h1M168 64.5h1M98 65.5h1M172 65.5h1M52 66.5h1M116 66.5h1M103 71.5h1M115 71.5h1M58 73.5h1M44 77.5h1M72 77.5h1M144 77.5h1M68 78.5h1M196 78.5h1M144 79.5h1M189 80.5h1M152 82.5h1M149 83.5h1M83 84.5h1M99 87.5h1M78 88.5h1M86 88.5h1M42 89.5h1M82 90.5h1M112 90.5h1M68 92.5h1M121 93.5h1M136 96.5h1M3 100.5h1M28 100.5h1M137 100.5h1M171 100.5h1M187 102.5h1M96 104.5h1M127 109.5h1M74 110.5h1M117 110.5h1M188 110.5h1M121 112.5h1M159 115.5h1M139 117.5h1M162 117.5h1M35 118.5h1M103 122.5h1M124 123.5h1M139 125.5h1M63 128.5h1M67 130.5h1M103 132.5h1M66 133.5h1M139 133.5h1M36 135.5h1M72 135.5h1M151 135.5h1M183 135.5h1M104 136.5h1M59 137.5h1M144 137.5h1M45 140.5h1M139 143.5h1M105 144.5h1M128 145.5h1M162 145.5h1M45 147.5h1M146 147.5h1M197 147.5h1M121 148.5h1M177 149.5h1M19 150.5h1M110 151.5h1M30 153.5h1M96 154.5h1M38 157.5h1M72 157.5h1M86 158.5h1M6 159.5h1M116 159.5h1"/><path stroke="#0000e0" d="M68 4.5h1M45 10.5h1M161 10.5h1M142 34.5h1M139 37.5h1M20 38.5h1M180 52.5h1M116 55.5h1M126 63.5h1M112 64.5h1M82 69.5h1M182 73.5h1M71 76.5h1M119 76.5h1M37 77.5h1M96 86.5h1M53 101.5h1M161 107.5h1M97 109.5h1M176 152.5h1M120 155.5h1"/><path stroke="#0000c0" d="M87 5.5h1M181 6.5h1M132 7.5h1M81 9.5h1M34 16.5h1M59 16.5h1M101 18.5h1M164 24.5h1M185 25.5h1M172 29.5h1M46 30.5h1M70 35.5h1M41 37.5h1M47 37.5h1M100 40.5h1M25 41.5h1M180 41.5h1M123 44.5h1M134 46.5h1M43 47.5h1M159 49.5h1M96 50.5h1M11 51.5h1M14 51.5h1M143 51.5h1M21 56.5h1M19 65.5h1M101 68.5h1M86 71.5h1M137 72.5h1M171 73.5h1M140 76.5h1M94 78.5h1M132 79.5h1M67 82.5h1M33 87.5h1M172 91.5h1M128 95.5h1M90 100.5h1M184 101.5h1M78 102.5h1M120 103.5h1M183 103.5h1M49 105.5h1M183 111.5h1M120 118.5h1M134 125.5h1M110 126.5h1M40 129.5h1M120 129.5h1M35 132.5h1M110 137.5h1M97 150.5h1M22 156.5h1"/><path stroke="#0000ff" d="M93 12.5h1M22 27.5h1M2 30.5h1M14 96.5h1M148 104.5h1M76 124.5h1M71 126.5h1M148 138.5h1M188 146.5h1M80 147.5h1"/><path stroke="#0000f0" d="M49 32.5h1M141 35.5h1M3 59.5h1M110 59.5h1M183 62.5h1M93 63.5h1M46 90.5h1M133 91.5h1M64 104.5h1M104 122.5h1M64 150.5h1"/><path stroke="#2060ff" d="M135 49.5h1"/><path stroke="#1540ff" d="M11 55.5h1M106 60.5h1M74 91.5h1"/><path stroke="#0a20ff" d="M28 57.5h1M198 123.5h1M168 127.5h1M85 141.5h1M11 147.5h1M0 155.5h1"/></g></pattern></defs>
<rect x="20" y="80" width="600" height="320" fill="url(#nz)"/>
<g fill="none" stroke-width="1"><path stroke="#00003f" d="M37 228.5h1"/><path stroke="#000041" d="M48 228.5h1"/><path stroke="#000044" d="M55 228.5h1"/><path stroke="#000048" d="M65 228.5h1"/><path stroke="#00004a" d="M79 228.5h1"/><path stroke="#00004d" d="M78 228.5h1"/><path stroke="#00004e" d="M66 228.5h1"/><path stroke="#00004f" d="M63 228.5h1"/><path stroke="#000055" d="M42 228.5h1M58 228.5h1"/><path stroke="#000057" d="M59 228.5h1"/><path stroke="#00005b" d="M33 228.5h1"/><path stroke="#00005d" d="M40 228.5h1"/><path stroke="#00005f" d="M282 239.5h1"/><path stroke="#000060" d="M47 228.5h1"/><path stroke="#000062" d="M51 228.5h1"/><path stroke="#000064" d="M49 228.5h1"/><path stroke="#000066" d="M332 84.5h1"/><path stroke="#000067" d="M61 228.5h1"/><path stroke="#000068" d="M417 90.5h1M56 228.5h1M68 228.5h1"/><path stroke="#000069" d="M602 100.5h1M328 243.5h1"/><path stroke="#00006a" d="M479 94.5h1"/><path stroke="#00006d" d="M427 91.5h2M462 91.5h1"/><path stroke="#00006f" d="M271 79.5h1"/><path stroke="#000070" d="M328 82.5h1M441 90.5h1"/><path stroke="#000074" d="M291 82.5h1"/><path stroke="#000075" d="M31 228.5h1M77 228.5h1"/><path stroke="#000077" d="M41 228.5h1"/><path stroke="#000079" d="M62 228.5h1"/><path stroke="#00007a" d="M480 93.5h1M553 96.5h1"/><path stroke="#00007b" d="M515 94.5h1"/><path stroke="#00007c" d="M454 92.5h1M568 97.5h1M580 98.5h1"/><path stroke="#00007d" d="M69 228.5h1"/><path stroke="#000080" d="M475 94.5h1M595 99.5h1"/><path stroke="#000081" d="M488 93.5h1M225 230.5h1M266 239.5h1"/><path stroke="#000082" d="M599 99.5h1M608 99.5h1M611 99.5h1"/><path stroke="#000083" d="M67 228.5h1M76 228.5h1"/><path stroke="#000085" d="M440 91.5h1M556 96.5h1M576 99.5h1M237 226.5h1"/><path stroke="#000086" d="M401 89.5h1M522 95.5h1M218 222.5h1"/><path stroke="#000087" d="M43 228.5h1M218 233.5h1M283 239.5h1"/><path stroke="#000088" d="M471 92.5h1M494 93.5h1"/><path stroke="#000089" d="M555 96.5h1M260 235.5h1M250 236.5h1"/><path stroke="#00008a" d="M478 93.5h1"/><path stroke="#00008c" d="M292 80.5h1M463 92.5h1M511 94.5h1M557 96.5h1M72 228.5h1"/><path stroke="#00008e" d="M216 224.5h1M226 233.5h1"/><path stroke="#00008f" d="M500 94.5h1M54 228.5h1"/><path stroke="#000090" d="M254 80.5h1M482 93.5h1M496 93.5h1M619 100.5h1M219 230.5h1M287 240.5h1"/><path stroke="#000091" d="M258 80.5h1M299 82.5h1M308 82.5h1M321 83.5h1M372 87.5h1M399 88.5h1M617 100.5h1"/><path stroke="#000092" d="M263 80.5h1M379 86.5h1M396 87.5h1M453 92.5h1M81 228.5h1"/><path stroke="#000093" d="M481 93.5h1M513 94.5h1"/><path stroke="#000094" d="M541 96.5h1M264 234.5h1"/><path stroke="#000095" d="M220 222.5h1M50 228.5h1M64 228.5h1"/><path stroke="#000096" d="M339 84.5h1M381 86.5h1"/><path stroke="#000097" d="M435 91.5h1M528 95.5h1M569 97.5h1M269 235.5h1"/><path stroke="#000098" d="M269 81.5h1M315 83.5h1M392 87.5h1M467 92.5h1M469 92.5h1M532 95.5h1M610 98.5h1"/><path stroke="#000099" d="M285 81.5h1M330 83.5h1M333 84.5h1M351 85.5h1"/><path stroke="#00009a" d="M288 81.5h1M356 86.5h1M605 99.5h1"/><path stroke="#00009b" d="M409 88.5h1M406 89.5h1M44 228.5h1"/><path stroke="#00009c" d="M264 80.5h1M262 81.5h1M290 81.5h1M430 90.5h1M548 96.5h1M607 99.5h1"/><path stroke="#00009d" d="M269 80.5h1M303 82.5h1M505 94.5h1M28 228.5h1"/><path stroke="#00009e" d="M345 84.5h1M379 87.5h1M509 94.5h1M222 230.5h1"/><path stroke="#00009f" d="M259 80.5h1M348 84.5h1M389 87.5h1M560 97.5h1M598 99.5h1"/><path stroke="#0000a1" d="M336 84.5h1M372 86.5h1M398 86.5h1M506 94.5h1M266 240.5h1"/><path stroke="#0000a2" d="M369 86.5h1M419 89.5h1M427 90.5h1M60 228.5h1M247 232.5h1"/><path stroke="#0000a3" d="M311 82.5h1"/><path stroke="#0000a4" d="M378 86.5h1M398 87.5h1M436 91.5h1M546 96.5h1M549 96.5h1M223 225.5h1M39 228.5h1"/><path stroke="#0000a5" d="M302 82.5h1M423 90.5h1M492 93.5h1"/><path stroke="#0000a6" d="M474 93.5h1M145 204.5h1"/><path stroke="#0000a7" d="M550 96.5h1M587 98.5h1M141 204.5h1"/><path stroke="#0000a8" d="M470 92.5h1"/><path stroke="#0000a9" d="M289 81.5h1M296 82.5h1M581 98.5h1M590 98.5h1"/><path stroke="#0000aa" d="M342 84.5h1M359 86.5h1M598 98.5h1"/><path stroke="#0000ab" d="M389 88.5h1M406 88.5h1M490 93.5h1M526 95.5h1M74 228.5h1"/><path stroke="#0000ac" d="M323 83.5h1M491 93.5h1M606 99.5h1M315 242.5h1"/><path stroke="#0000ad" d="M437 91.5h1"/><path stroke="#0000ae" d="M359 85.5h1M417 89.5h1M460 92.5h1M487 93.5h1M219 238.5h1"/><path stroke="#0000b0" d="M328 83.5h1M618 100.5h1M329 243.5h1"/><path stroke="#0000b1" d="M403 88.5h1M418 89.5h1M443 91.5h1M547 96.5h1M135 203.5h1M229 234.5h1"/><path stroke="#0000b2" d="M394 87.5h1"/><path stroke="#0000b3" d="M283 81.5h1M297 82.5h1M405 88.5h1M432 89.5h1M446 91.5h1M150 205.5h1"/><path stroke="#0000b4" d="M462 92.5h1M524 95.5h1"/><path stroke="#0000b5" d="M335 84.5h1M346 84.5h1M375 86.5h1M397 87.5h1"/><path stroke="#0000b6" d="M277 81.5h1M431 90.5h1M608 98.5h1M219 225.5h1"/><path stroke="#0000b7" d="M307 82.5h1M327 243.5h1"/><path stroke="#0000b8" d="M210 222.5h1"/><path stroke="#0000b9" d="M229 226.5h1M237 236.5h1"/><path stroke="#0000ba" d="M473 93.5h1M563 97.5h1M219 229.5h1"/><path stroke="#0000bb" d="M251 80.5h1M357 85.5h1M376 86.5h1M472 92.5h1M475 93.5h1"/><path stroke="#0000bc" d="M434 91.5h1M504 94.5h1"/><path stroke="#0000bd" d="M317 83.5h1M583 98.5h1"/><path stroke="#0000be" d="M255 80.5h1M438 91.5h1M559 97.5h1M567 97.5h1"/><path stroke="#0000bf" d="M554 96.5h1"/><path stroke="#0000c0" d="M361 85.5h1M388 87.5h1"/><path stroke="#0000c1" d="M271 80.5h1M331 83.5h1M424 90.5h1M572 97.5h1M222 244.5h1"/><path stroke="#0000c2" d="M616 100.5h1M236 218.5h1M231 227.5h1M288 240.5h1"/><path stroke="#0000c3" d="M281 81.5h1M298 82.5h1M319 83.5h1M591 98.5h1M223 224.5h1"/><path stroke="#0000c4" d="M324 83.5h1M483 93.5h1M539 95.5h1M578 98.5h1M223 232.5h1"/><path stroke="#0000c5" d="M508 94.5h1M575 97.5h1"/><path stroke="#0000c6" d="M280 81.5h1M224 227.5h1"/><path stroke="#0000c7" d="M362 85.5h1M602 99.5h1M237 229.5h1"/><path stroke="#0000c8" d="M313 82.5h1"/><path stroke="#0000c9" d="M400 88.5h1M485 93.5h1M83 228.5h1"/><path stroke="#0000ca" d="M314 83.5h1M382 86.5h1M442 91.5h1M497 94.5h1M589 98.5h1"/><path stroke="#0000cb" d="M552 96.5h1M136 204.5h1"/><path stroke="#0000cc" d="M498 94.5h1M537 229.5h1M587 236.5h1"/><path stroke="#0000cd" d="M286 81.5h1M350 84.5h1M410 88.5h1M413 89.5h1M501 94.5h1M221 215.5h1"/><path stroke="#0000ce" d="M432 90.5h1M441 91.5h1M147 204.5h1M233 224.5h1M219 237.5h1"/><path stroke="#0000cf" d="M479 93.5h1M533 95.5h1M542 96.5h1M200 222.5h1M231 222.5h1M213 235.5h1M215 242.5h1M316 242.5h1"/><path stroke="#0000d0" d="M320 83.5h1M225 227.5h1"/><path stroke="#0000d1" d="M363 85.5h1M233 226.5h1M502 227.5h1"/><path stroke="#0000d2" d="M256 80.5h1M380 86.5h1"/><path stroke="#0000d3" d="M260 80.5h1M266 80.5h1M337 84.5h1M450 92.5h1M610 99.5h1"/><path stroke="#0000d4" d="M448 92.5h1"/><path stroke="#0000d5" d="M225 226.5h1M254 237.5h1"/><path stroke="#0000d6" d="M393 87.5h1M449 92.5h1"/><path stroke="#0000d7" d="M414 89.5h1M272 240.5h1M291 241.5h1"/><path stroke="#0000d8" d="M428 90.5h1M370 229.5h1"/><path stroke="#0000d9" d="M326 83.5h1"/><path stroke="#0000da" d="M338 84.5h1M152 204.5h1M178 211.5h1"/><path stroke="#0000db" d="M356 85.5h1M137 204.5h1M155 205.5h1M161 207.5h1M190 218.5h1M232 229.5h1M566 229.5h1"/><path stroke="#0000dc" d="M300 82.5h1M263 239.5h1"/><path stroke="#0000dd" d="M261 80.5h1M291 81.5h1"/><path stroke="#0000de" d="M262 80.5h1M221 222.5h1M288 227.5h1"/><path stroke="#0000df" d="M310 82.5h1M312 82.5h1"/><path stroke="#0000e0" d="M98 228.5h1M377 240.5h1M305 242.5h1M313 243.5h1"/><path stroke="#0000e2" d="M368 86.5h1M113 227.5h1M392 227.5h1M141 229.5h1"/><path stroke="#0000e3" d="M257 80.5h1M275 81.5h1M260 238.5h1"/><path stroke="#0000e4" d="M360 85.5h1M235 229.5h1M459 229.5h1"/><path stroke="#0000e5" d="M267 80.5h1M425 90.5h1M159 206.5h1M409 227.5h1M474 227.5h1"/><path stroke="#0000e6" d="M270 80.5h1M332 83.5h1M224 223.5h1"/><path stroke="#0000e7" d="M370 86.5h1M401 88.5h1M222 223.5h1"/><path stroke="#0000e8" d="M293 82.5h1M254 233.5h1"/><path stroke="#0000e9" d="M252 80.5h1M316 83.5h1M142 204.5h1"/><path stroke="#0000ea" d="M426 90.5h1M594 227.5h1M230 231.5h1"/><path stroke="#0000eb" d="M166 209.5h1M370 227.5h1"/><path stroke="#0000ec" d="M223 221.5h1"/><path stroke="#0000ed" d="M224 231.5h1"/><path stroke="#0000ee" d="M236 229.5h1M272 237.5h1M256 238.5h1"/><path stroke="#0000ef" d="M524 227.5h1M108 228.5h1M211 229.5h1"/><path stroke="#0000f0" d="M226 234.5h1M278 238.5h1"/><path stroke="#0000f1" d="M149 205.5h1"/><path stroke="#0000f2" d="M215 223.5h1"/><path stroke="#0000f4" d="M26 228.5h1M218 235.5h1"/><path stroke="#0000f5" d="M222 239.5h1"/><path stroke="#0000f6" d="M192 218.5h1M245 227.5h1M93 228.5h1"/><path stroke="#0000f7" d="M573 227.5h1"/><path stroke="#0000f9" d="M259 227.5h1"/><path stroke="#0000fa" d="M183 215.5h1"/><path stroke="#0000fb" d="M227 223.5h1M386 227.5h1M169 229.5h1"/><path stroke="#0000fc" d="M173 212.5h1"/><path stroke="#0000fd" d="M224 225.5h1"/><path stroke="#0000fe" d="M194 215.5h1"/><path stroke="#0000ff" d="M202 220.5h1M227 222.5h1M330 228.5h1M223 235.5h1M587 235.5h1M323 242.5h1"/><path stroke="#0001ff" d="M127 227.5h1M411 228.5h1"/><path stroke="#0002ff" d="M226 238.5h1"/><path stroke="#0003ff" d="M154 228.5h1M235 234.5h1"/><path stroke="#0004ff" d="M289 228.5h1M313 228.5h1M314 242.5h1"/><path stroke="#0005ff" d="M229 227.5h1M560 229.5h1"/><path stroke="#0006ff" d="M163 207.5h1M153 228.5h1"/><path stroke="#0007ff" d="M260 227.5h1"/><path stroke="#0008ff" d="M299 240.5h1"/><path stroke="#0009ff" d="M224 233.5h1"/><path stroke="#000aff" d="M166 228.5h1M318 242.5h1"/><path stroke="#000dff" d="M422 229.5h1"/><path stroke="#000eff" d="M88 228.5h1M230 235.5h1"/><path stroke="#000fff" d="M217 221.5h1M467 227.5h1M222 229.5h1"/><path stroke="#0010ff" d="M309 241.5h1"/><path stroke="#0011ff" d="M296 241.5h1"/><path stroke="#0012ff" d="M109 228.5h1M385 228.5h1M262 237.5h1"/><path stroke="#0015ff" d="M132 228.5h1M211 228.5h1M570 228.5h1"/><path stroke="#0016ff" d="M157 228.5h1"/><path stroke="#0018ff" d="M205 228.5h1"/><path stroke="#0019ff" d="M228 231.5h1"/><path stroke="#001aff" d="M303 227.5h1M353 228.5h1"/><path stroke="#001bff" d="M463 228.5h1"/><path stroke="#001cff" d="M448 228.5h1"/><path stroke="#001dff" d="M186 228.5h1M279 228.5h1"/><path stroke="#001eff" d="M351 228.5h1"/><path stroke="#001fff" d="M300 228.5h2"/><path stroke="#0020ff" d="M107 228.5h1M400 228.5h1"/><path stroke="#0021ff" d="M428 228.5h1"/><path stroke="#0022ff" d="M27 228.5h1M376 228.5h1"/><path stroke="#0023ff" d="M158 206.5h1M137 228.5h1M280 229.5h1"/><path stroke="#0024ff" d="M186 214.5h1M261 227.5h1M212 228.5h1"/><path stroke="#0026ff" d="M332 228.5h1"/><path stroke="#0027ff" d="M145 228.5h1"/><path stroke="#0028ff" d="M292 240.5h1"/><path stroke="#0029ff" d="M475 228.5h1M585 228.5h1"/><path stroke="#002aff" d="M176 213.5h1M150 228.5h1M168 228.5h1M381 228.5h1"/><path stroke="#002bff" d="M260 237.5h1"/><path stroke="#002dff" d="M469 227.5h1"/><path stroke="#002eff" d="M357 229.5h1"/><path stroke="#002fff" d="M312 228.5h1"/><path stroke="#0030ff" d="M155 228.5h1M321 242.5h1"/><path stroke="#0031ff" d="M121 228.5h1M242 228.5h1"/><path stroke="#0032ff" d="M156 206.5h1"/><path stroke="#0033ff" d="M270 237.5h1"/><path stroke="#0034ff" d="M425 228.5h1M519 228.5h1M360 229.5h1"/><path stroke="#0035ff" d="M135 228.5h1M422 228.5h1M317 242.5h1"/><path stroke="#0036ff" d="M366 85.5h1M102 228.5h1"/><path stroke="#0037ff" d="M593 98.5h1M105 227.5h1M561 229.5h1"/><path stroke="#0039ff" d="M292 81.5h1M369 228.5h1M103 229.5h1"/><path stroke="#003aff" d="M175 228.5h1"/><path stroke="#003bff" d="M180 212.5h1M321 228.5h1M301 240.5h1"/><path stroke="#003dff" d="M274 228.5h1M378 228.5h1"/><path stroke="#0040ff" d="M280 227.5h1M407 228.5h1M587 234.5h1M377 239.5h1"/><path stroke="#0041ff" d="M146 204.5h1M305 228.5h1"/><path stroke="#0042ff" d="M238 228.5h1"/><path stroke="#0043ff" d="M214 229.5h1"/><path stroke="#0045ff" d="M154 205.5h1M298 228.5h1M496 228.5h1M264 236.5h1"/><path stroke="#0047ff" d="M153 205.5h1M331 228.5h1M302 240.5h1"/><path stroke="#0048ff" d="M190 217.5h1M390 228.5h1M298 240.5h1"/><path stroke="#0049ff" d="M527 227.5h1M289 240.5h1"/><path stroke="#004aff" d="M489 93.5h1M576 98.5h1M139 204.5h1M187 216.5h1M254 228.5h1M318 228.5h1M182 229.5h1"/><path stroke="#004cff" d="M170 228.5h1"/><path stroke="#004fff" d="M265 236.5h1"/><path stroke="#0050ff" d="M167 209.5h2M318 229.5h1"/><path stroke="#0052ff" d="M207 222.5h1M257 228.5h1"/><path stroke="#0053ff" d="M142 227.5h1M287 228.5h1M383 228.5h1M487 228.5h1M236 232.5h1M319 242.5h1"/><path stroke="#0054ff" d="M273 239.5h1"/><path stroke="#0055ff" d="M199 229.5h1"/><path stroke="#0056ff" d="M279 239.5h1"/><path stroke="#0057ff" d="M460 228.5h1"/><path stroke="#0058ff" d="M216 228.5h1"/><path stroke="#0059ff" d="M382 228.5h1M587 233.5h1"/><path stroke="#005bff" d="M165 228.5h1"/><path stroke="#005cff" d="M619 228.5h1"/><path stroke="#005dff" d="M255 228.5h1M434 228.5h1M108 229.5h1"/><path stroke="#005eff" d="M517 94.5h1M24 228.5h1M417 228.5h1M466 228.5h1"/><path stroke="#0060ff" d="M393 227.5h1M418 228.5h1M553 228.5h1M568 228.5h1"/><path stroke="#0061ff" d="M472 228.5h1"/><path stroke="#0063ff" d="M408 228.5h1M274 239.5h1"/><path stroke="#0064ff" d="M305 82.5h1M378 227.5h1M256 235.5h1"/><path stroke="#0066ff" d="M160 228.5h1M329 228.5h1M344 228.5h1M537 228.5h1"/><path stroke="#0067ff" d="M612 100.5h1M151 205.5h1M241 228.5h1"/><path stroke="#0068ff" d="M157 206.5h1M427 228.5h1M346 229.5h1"/><path stroke="#0069ff" d="M534 95.5h1"/><path stroke="#006aff" d="M170 210.5h1M195 228.5h1"/><path stroke="#006bff" d="M374 86.5h1M163 228.5h1"/><path stroke="#006cff" d="M199 221.5h1"/><path stroke="#006dff" d="M527 95.5h1M175 211.5h1M25 228.5h1M368 228.5h1M587 228.5h1M614 228.5h1"/><path stroke="#006fff" d="M297 227.5h1"/><path stroke="#0070ff" d="M501 229.5h1"/><path stroke="#0071ff" d="M275 228.5h1M555 228.5h1M294 240.5h1"/><path stroke="#0072ff" d="M444 91.5h1M245 228.5h1M510 228.5h1"/><path stroke="#0075ff" d="M187 228.5h1"/><path stroke="#0077ff" d="M315 228.5h1"/><path stroke="#0078ff" d="M274 81.5h1M333 227.5h1M174 228.5h1"/><path stroke="#0079ff" d="M152 227.5h1M197 228.5h1"/><path stroke="#007aff" d="M294 228.5h1"/><path stroke="#007cff" d="M422 89.5h1M232 231.5h1"/><path stroke="#007dff" d="M293 227.5h1"/><path stroke="#007eff" d="M279 81.5h1"/><path stroke="#007fff" d="M322 252.5h1"/><path stroke="#0080ff" d="M291 240.5h1"/><path stroke="#0082ff" d="M249 227.5h1"/><path stroke="#0083ff" d="M416 89.5h1"/><path stroke="#0084ff" d="M211 225.5h1M263 227.5h1M257 229.5h1"/><path stroke="#0085ff" d="M594 99.5h1"/><path stroke="#0086ff" d="M169 209.5h1"/><path stroke="#0087ff" d="M152 205.5h1M128 229.5h1"/><path stroke="#0088ff" d="M178 212.5h1"/><path stroke="#0089ff" d="M204 222.5h1"/><path stroke="#008aff" d="M162 207.5h1"/><path stroke="#008bff" d="M191 216.5h1"/><path stroke="#008cff" d="M280 239.5h1"/><path stroke="#0091ff" d="M403 229.5h1"/><path stroke="#0092ff" d="M311 241.5h1"/><path stroke="#0093ff" d="M270 227.5h1"/><path stroke="#0094ff" d="M305 241.5h1M313 242.5h1"/><path stroke="#009cff" d="M188 215.5h1"/><path stroke="#009eff" d="M160 207.5h1"/><path stroke="#00a1ff" d="M164 208.5h1"/><path stroke="#00a3ff" d="M160 227.5h1M477 227.5h2"/><path stroke="#00a4ff" d="M542 227.5h1"/><path stroke="#00a5ff" d="M176 227.5h1"/><path stroke="#00a8ff" d="M234 230.5h1"/><path stroke="#00a9ff" d="M307 241.5h1"/><path stroke="#00aaff" d="M166 208.5h1"/><path stroke="#00b0ff" d="M235 232.5h1M277 238.5h1"/><path stroke="#00b1ff" d="M338 227.5h1"/><path stroke="#00b3ff" d="M493 227.5h1"/><path stroke="#00b5ff" d="M455 227.5h1M278 239.5h1"/><path stroke="#00b8ff" d="M179 227.5h1"/><path stroke="#00bbff" d="M295 240.5h1"/><path stroke="#00bcff" d="M321 227.5h1M87 228.5h1"/><path stroke="#00bdff" d="M591 227.5h1"/><path stroke="#00beff" d="M114 228.5h1"/><path stroke="#00bfff" d="M587 229.5h1M587 232.5h1"/><path stroke="#00c0ff" d="M213 224.5h1"/><path stroke="#00c2ff" d="M192 217.5h1"/><path stroke="#00c3ff" d="M195 217.5h1M82 228.5h1M85 228.5h1M249 235.5h1"/><path stroke="#00c4ff" d="M250 235.5h1"/><path stroke="#00c7ff" d="M172 210.5h1"/><path stroke="#00caff" d="M210 225.5h1"/><path stroke="#00cbff" d="M183 214.5h1"/><path stroke="#00ccff" d="M161 228.5h1M342 228.5h1"/><path stroke="#00cdff" d="M84 228.5h1M414 228.5h1"/><path stroke="#00ceff" d="M173 211.5h1M111 228.5h1M355 228.5h1M433 228.5h1M436 228.5h1"/><path stroke="#00cfff" d="M218 227.5h1M90 228.5h1M100 228.5h1M206 228.5h1M272 228.5h1M394 228.5h1M490 228.5h1"/><path stroke="#00d0ff" d="M203 222.5h1M263 228.5h1M295 228.5h1M343 228.5h1M379 228.5h1M456 228.5h1M465 228.5h1"/><path stroke="#00d1ff" d="M217 227.5h1M138 228.5h1M177 228.5h1M189 228.5h1M440 228.5h1M479 228.5h1"/><path stroke="#00d2ff" d="M117 228.5h1M316 228.5h1M444 228.5h1M592 228.5h1"/><path stroke="#00d3ff" d="M299 228.5h1M393 228.5h1M451 228.5h1M477 228.5h1M531 228.5h1M601 228.5h1M303 241.5h1"/><path stroke="#00d4ff" d="M269 228.5h1M435 228.5h1M253 236.5h1"/><path stroke="#00d5ff" d="M306 241.5h1"/><path stroke="#00d7ff" d="M297 228.5h1"/><path stroke="#00d8ff" d="M202 228.5h1M311 228.5h1M462 228.5h1M515 228.5h1M300 241.5h1"/><path stroke="#00d9ff" d="M613 228.5h1M587 230.5h1M377 238.5h1"/><path stroke="#00daff" d="M143 228.5h1M148 228.5h1M271 228.5h1M278 228.5h1"/><path stroke="#00dbff" d="M99 228.5h1M106 228.5h1M380 228.5h1M438 228.5h1"/><path stroke="#00dcff" d="M215 225.5h1M94 228.5h1M116 228.5h1M164 228.5h1M302 228.5h1M591 228.5h1M261 237.5h1"/><path stroke="#00ddff" d="M171 210.5h1M120 228.5h1M122 228.5h1M169 228.5h1M172 228.5h1M231 228.5h1M495 228.5h1"/><path stroke="#00deff" d="M149 228.5h1M579 228.5h1"/><path stroke="#00dfff" d="M215 228.5h1M481 228.5h1"/><path stroke="#00e0ff" d="M131 228.5h1M270 228.5h1M528 228.5h1M569 228.5h1"/><path stroke="#00e1ff" d="M303 228.5h1M480 228.5h1"/><path stroke="#00e2ff" d="M375 228.5h1M504 228.5h1M299 241.5h1"/><path stroke="#00e3ff" d="M194 218.5h1M185 228.5h1M346 228.5h1M520 228.5h1"/><path stroke="#00e4ff" d="M101 228.5h1M151 228.5h1M574 228.5h1M586 228.5h1"/><path stroke="#00e5ff" d="M123 228.5h1M404 228.5h1M584 228.5h1M603 228.5h1"/><path stroke="#00e6ff" d="M556 228.5h1M559 228.5h1"/><path stroke="#00e7ff" d="M310 228.5h1M314 228.5h1M550 228.5h1"/><path stroke="#00e8ff" d="M205 221.5h1M322 228.5h1M245 233.5h1"/><path stroke="#00e9ff" d="M220 228.5h1"/><path stroke="#00eaff" d="M271 237.5h1"/><path stroke="#00ebff" d="M125 228.5h1M286 228.5h1M469 228.5h1M521 228.5h1"/><path stroke="#00ecff" d="M410 228.5h1M470 228.5h1"/><path stroke="#00edff" d="M213 228.5h1M397 228.5h1M447 228.5h1M529 228.5h1"/><path stroke="#00eeff" d="M334 228.5h1"/><path stroke="#00efff" d="M340 228.5h1M530 228.5h1M616 228.5h1"/><path stroke="#00f0ff" d="M97 228.5h1"/><path stroke="#00f1ff" d="M219 228.5h1M367 228.5h1M296 240.5h1"/><path stroke="#00f2ff" d="M248 228.5h1M398 228.5h1M583 228.5h1"/><path stroke="#00f3ff" d="M228 228.5h1M416 228.5h1M517 228.5h1M524 228.5h1M547 228.5h1"/><path stroke="#00f4ff" d="M207 228.5h1M291 228.5h1M399 228.5h1M589 228.5h1M598 228.5h1"/><path stroke="#00f5ff" d="M180 228.5h1M217 228.5h1"/><path stroke="#00f7ff" d="M266 228.5h1M308 228.5h1M512 228.5h1M575 228.5h1"/><path stroke="#00f8ff" d="M162 228.5h1M203 228.5h1M549 228.5h1M596 228.5h1"/><path stroke="#00f9ff" d="M110 228.5h1M349 228.5h1M364 228.5h1M437 228.5h1M499 228.5h1"/><path stroke="#00faff" d="M403 228.5h1"/><path stroke="#00fcff" d="M260 228.5h1M320 228.5h1M326 228.5h1M558 228.5h1"/><path stroke="#00feff" d="M144 228.5h1M482 228.5h1M498 228.5h1M605 228.5h1"/><path stroke="#00ff00" d="M252 234.5h1"/><path stroke="#00ff01" d="M534 228.5h1"/><path stroke="#00ff06" d="M292 228.5h1M336 228.5h1"/><path stroke="#00ff07" d="M209 223.5h1"/><path stroke="#00ff0b" d="M239 228.5h1"/><path stroke="#00ff0d" d="M350 228.5h1"/><path stroke="#00ff0f" d="M345 228.5h1M567 228.5h1"/><path stroke="#00ff10" d="M387 228.5h1"/><path stroke="#00ff11" d="M136 228.5h1"/><path stroke="#00ff12" d="M194 228.5h1"/><path stroke="#00ff14" d="M604 228.5h1"/><path stroke="#00ff15" d="M200 220.5h1M152 228.5h1"/><path stroke="#00ff18" d="M133 228.5h1"/><path stroke="#00ff19" d="M471 228.5h1M588 228.5h1"/><path stroke="#00ff1d" d="M273 228.5h1"/><path stroke="#00ff20" d="M348 228.5h1M491 228.5h1"/><path stroke="#00ff21" d="M424 228.5h1M535 228.5h1"/><path stroke="#00ff22" d="M358 228.5h1"/><path stroke="#00ff25" d="M201 228.5h1M478 228.5h1"/><path stroke="#00ff26" d="M86 228.5h1"/><path stroke="#00ff27" d="M225 229.5h1"/><path stroke="#00ff28" d="M240 228.5h1M395 228.5h1"/><path stroke="#00ff2a" d="M365 228.5h1M441 228.5h1"/><path stroke="#00ff2c" d="M113 228.5h1"/><path stroke="#00ff2d" d="M268 228.5h1M518 228.5h1"/><path stroke="#00ff2e" d="M565 228.5h1"/><path stroke="#00ff2f" d="M486 228.5h1"/><path stroke="#00ff30" d="M227 228.5h1"/><path stroke="#00ff33" d="M251 234.5h1"/><path stroke="#00ff36" d="M507 228.5h1"/><path stroke="#00ff37" d="M156 228.5h1"/><path stroke="#00ff38" d="M406 228.5h1M536 228.5h1"/><path stroke="#00ff3b" d="M548 228.5h1"/><path stroke="#00ff40" d="M184 214.5h1M277 228.5h1"/><path stroke="#00ff41" d="M208 224.5h1M208 228.5h1"/><path stroke="#00ff43" d="M212 224.5h1M147 228.5h1"/><path stroke="#00ff44" d="M606 228.5h1"/><path stroke="#00ff45" d="M240 233.5h1"/><path stroke="#00ff47" d="M126 228.5h1"/><path stroke="#00ff48" d="M199 220.5h1"/><path stroke="#00ff49" d="M488 228.5h1"/><path stroke="#00ff4e" d="M189 215.5h1M476 228.5h1"/><path stroke="#00ff50" d="M216 225.5h1"/><path stroke="#00ff51" d="M242 232.5h1"/><path stroke="#00ff52" d="M171 228.5h1M328 228.5h1M582 228.5h1"/><path stroke="#00ff55" d="M288 228.5h1M409 228.5h1"/><path stroke="#00ff56" d="M268 238.5h1"/><path stroke="#00ff57" d="M580 228.5h1"/><path stroke="#00ff58" d="M92 228.5h1M503 228.5h1"/><path stroke="#00ff5a" d="M373 228.5h1"/><path stroke="#00ff5b" d="M267 228.5h1M254 236.5h1M274 238.5h1"/><path stroke="#00ff5c" d="M501 228.5h1"/><path stroke="#00ff5d" d="M494 228.5h1"/><path stroke="#00ff60" d="M244 234.5h1"/><path stroke="#00ff61" d="M96 228.5h1M420 228.5h1"/><path stroke="#00ff62" d="M181 213.5h1"/><path stroke="#00ff65" d="M119 228.5h1"/><path stroke="#00ff67" d="M333 228.5h1"/><path stroke="#00ff68" d="M209 228.5h1M526 228.5h1"/><path stroke="#00ff6a" d="M576 228.5h1"/><path stroke="#00ff6b" d="M222 227.5h1M253 228.5h1"/><path stroke="#00ff6c" d="M508 228.5h1"/><path stroke="#00ff6e" d="M103 228.5h1M228 230.5h1M241 232.5h1"/><path stroke="#00ff71" d="M230 228.5h1"/><path stroke="#00ff72" d="M219 226.5h1M457 228.5h1M497 228.5h1"/><path stroke="#00ff73" d="M374 228.5h1M269 237.5h1"/><path stroke="#00ff74" d="M247 233.5h1"/><path stroke="#00ff7a" d="M459 228.5h1M502 228.5h1"/><path stroke="#00ff7b" d="M461 228.5h1"/><path stroke="#00ff7d" d="M533 228.5h1M581 228.5h1M273 238.5h1"/><path stroke="#00ff82" d="M224 229.5h1"/><path stroke="#00ff83" d="M384 228.5h1"/><path stroke="#00ff84" d="M423 228.5h1M255 236.5h1"/><path stroke="#00ff88" d="M193 217.5h1"/><path stroke="#00ff89" d="M95 228.5h1"/><path stroke="#00ff8a" d="M198 219.5h1M401 228.5h1M610 228.5h1"/><path stroke="#00ff8b" d="M284 228.5h1M239 233.5h1"/><path stroke="#00ff8e" d="M618 228.5h1M237 231.5h1"/><path stroke="#00ff8f" d="M246 233.5h1"/><path stroke="#00ff90" d="M293 228.5h1"/><path stroke="#00ff92" d="M516 228.5h1"/><path stroke="#00ff94" d="M250 228.5h1"/><path stroke="#00ff95" d="M493 228.5h1"/><path stroke="#00ff96" d="M181 228.5h1M309 228.5h1M319 228.5h1"/><path stroke="#00ff97" d="M298 241.5h1"/><path stroke="#00ff98" d="M176 228.5h1"/><path stroke="#00ff99" d="M182 213.5h1"/><path stroke="#00ff9a" d="M302 241.5h1"/><path stroke="#00ff9d" d="M201 221.5h1"/><path stroke="#00ff9e" d="M177 212.5h1M196 228.5h1M232 228.5h1M356 228.5h1M413 228.5h1M266 238.5h1"/><path stroke="#00ffa0" d="M179 228.5h1"/><path stroke="#00ffa2" d="M179 212.5h1M304 241.5h1"/><path stroke="#00ffa6" d="M281 228.5h1"/><path stroke="#00ffaa" d="M243 234.5h1"/><path stroke="#00ffaf" d="M259 237.5h1"/><path stroke="#00ffb0" d="M91 228.5h1"/><path stroke="#00ffb4" d="M180 213.5h1"/><path stroke="#00ffb5" d="M301 241.5h1"/><path stroke="#00ffb8" d="M196 218.5h1"/><path stroke="#00ffbb" d="M563 228.5h1"/><path stroke="#00ffbc" d="M566 228.5h1M611 228.5h1"/><path stroke="#00ffbd" d="M248 235.5h1"/><path stroke="#00ffbe" d="M185 214.5h1M546 228.5h1"/><path stroke="#00ffbf" d="M454 228.5h1"/><path stroke="#00ffc0" d="M235 228.5h1M599 228.5h1M607 228.5h1M615 228.5h1"/><path stroke="#00ffc1" d="M139 228.5h1M193 228.5h1M244 228.5h1M562 228.5h1"/><path stroke="#00ffc2" d="M198 228.5h1M249 228.5h1M557 228.5h1"/><path stroke="#00ffc3" d="M446 228.5h1M564 228.5h1"/><path stroke="#00ffc4" d="M283 228.5h1M485 228.5h1M595 228.5h1"/><path stroke="#00ffc5" d="M105 228.5h1M282 228.5h1"/><path stroke="#00ffc6" d="M251 228.5h1M372 228.5h1"/><path stroke="#00ffc7" d="M130 228.5h1M146 228.5h1M184 228.5h1M306 228.5h1M522 228.5h1"/><path stroke="#00ffc8" d="M234 228.5h1M405 228.5h1M468 228.5h1"/><path stroke="#00ffc9" d="M359 228.5h1"/><path stroke="#00ffca" d="M128 228.5h1"/><path stroke="#00ffcc" d="M335 228.5h1M386 228.5h1M426 228.5h1M297 240.5h1"/><path stroke="#00ffcd" d="M362 228.5h1M483 228.5h1"/><path stroke="#00ffce" d="M182 228.5h1M449 228.5h1"/><path stroke="#00ffcf" d="M206 223.5h1M158 228.5h1M210 228.5h1M612 228.5h1"/><path stroke="#00ffd0" d="M388 228.5h1"/><path stroke="#00ffd1" d="M366 228.5h1M419 228.5h1M429 228.5h1"/><path stroke="#00ffd2" d="M542 228.5h1"/><path stroke="#00ffd3" d="M264 228.5h1M541 228.5h1"/><path stroke="#00ffd4" d="M243 228.5h1M600 228.5h1"/><path stroke="#00ffd5" d="M467 228.5h1"/><path stroke="#00ffd6" d="M23 228.5h1M214 228.5h1M352 228.5h1"/><path stroke="#00ffd7" d="M280 228.5h1M317 228.5h1M421 228.5h1"/><path stroke="#00ffd8" d="M540 228.5h1"/><path stroke="#00ffd9" d="M176 212.5h1M377 228.5h1M412 228.5h1M597 228.5h1"/><path stroke="#00ffdc" d="M265 228.5h1M371 228.5h1M452 228.5h1"/><path stroke="#00ffdd" d="M514 228.5h1M617 228.5h1"/><path stroke="#00ffde" d="M159 228.5h1M290 228.5h1M347 228.5h1"/><path stroke="#00ffdf" d="M285 228.5h1M392 228.5h1"/><path stroke="#00ffe0" d="M200 228.5h1M233 228.5h1M338 228.5h1M415 228.5h1M571 228.5h1"/><path stroke="#00ffe1" d="M21 228.5h1M104 228.5h1M492 228.5h1M258 235.5h1"/><path stroke="#00ffe2" d="M229 228.5h1M506 228.5h1M544 228.5h1M593 228.5h1"/><path stroke="#00ffe3" d="M22 228.5h1M443 228.5h1M560 228.5h1"/><path stroke="#00ffe4" d="M252 228.5h1M450 228.5h1M543 228.5h1M552 228.5h1"/><path stroke="#00ffe5" d="M218 228.5h1M361 228.5h1"/><path stroke="#00ffe6" d="M174 211.5h1M197 219.5h1M246 228.5h1"/><path stroke="#00ffe7" d="M167 228.5h1M473 228.5h1M539 228.5h1"/><path stroke="#00ffe8" d="M442 228.5h1M453 228.5h1"/><path stroke="#00ffe9" d="M339 228.5h1M590 228.5h1M233 230.5h1"/><path stroke="#00ffea" d="M20 228.5h1M430 228.5h1M525 228.5h1"/><path stroke="#00ffeb" d="M173 228.5h1M237 228.5h1M505 228.5h1"/><path stroke="#00ffec" d="M276 238.5h1"/><path stroke="#00ffed" d="M112 228.5h1M573 228.5h1"/><path stroke="#00ffee" d="M523 228.5h1"/><path stroke="#00ffef" d="M341 228.5h1M354 228.5h1M389 228.5h1M396 228.5h1M511 228.5h1M608 228.5h1"/><path stroke="#00fff0" d="M296 228.5h1"/><path stroke="#00fff1" d="M236 228.5h1M431 228.5h1"/><path stroke="#00fff2" d="M262 228.5h1M578 228.5h1"/><path stroke="#00fff3" d="M127 228.5h1M500 228.5h1M293 240.5h1"/><path stroke="#00fff4" d="M124 228.5h1"/><path stroke="#00fff5" d="M183 228.5h1M192 228.5h1M513 228.5h1M229 229.5h1"/><path stroke="#00fff6" d="M458 228.5h1M238 231.5h1"/><path stroke="#00fff7" d="M191 228.5h1M432 228.5h1M455 228.5h1M509 228.5h1"/><path stroke="#00fff8" d="M134 228.5h1M602 228.5h1"/><path stroke="#00fff9" d="M256 228.5h1M464 228.5h1M275 238.5h1"/><path stroke="#00fffa" d="M307 228.5h1M439 228.5h1"/><path stroke="#00fffb" d="M204 228.5h1M325 228.5h1"/><path stroke="#00fffc" d="M445 228.5h1M554 228.5h1"/><path stroke="#00fffd" d="M263 236.5h1"/><path stroke="#00fffe" d="M261 228.5h1"/><path stroke="#00ffff" d="M327 228.5h1M594 228.5h1M587 231.5h1"/><path stroke="#02ff00" d="M140 228.5h1"/><path stroke="#03ff00" d="M370 228.5h1"/><path stroke="#06ff00" d="M214 226.5h1"/><path stroke="#08ff00" d="M532 228.5h1"/><path stroke="#0cff00" d="M191 217.5h1"/><path stroke="#0dff00" d="M484 228.5h1M551 228.5h1"/><path stroke="#14ff00" d="M257 235.5h1"/><path stroke="#1cff00" d="M195 218.5h1"/><path stroke="#20ff00" d="M231 231.5h1"/><path stroke="#24ff00" d="M211 224.5h1"/><path stroke="#28ff00" d="M272 238.5h1"/><path stroke="#35ff00" d="M258 228.5h1"/><path stroke="#38ff00" d="M89 228.5h1"/><path stroke="#3bff00" d="M178 228.5h1"/><path stroke="#3cff00" d="M577 228.5h1"/><path stroke="#3dff00" d="M142 228.5h1"/><path stroke="#3eff00" d="M227 230.5h1"/><path stroke="#3fff00" d="M357 228.5h1"/><path stroke="#40ff00" d="M190 228.5h1"/><path stroke="#43ff00" d="M186 215.5h1"/><path stroke="#47ff00" d="M118 228.5h1M474 228.5h1"/><path stroke="#49ff00" d="M141 228.5h1M261 236.5h1"/><path stroke="#4cff00" d="M115 228.5h1"/><path stroke="#4fff00" d="M323 228.5h1"/><path stroke="#51ff00" d="M223 227.5h1"/><path stroke="#56ff00" d="M402 228.5h1M538 228.5h1"/><path stroke="#5cff00" d="M202 221.5h1"/><path stroke="#64ff00" d="M199 228.5h1"/><path stroke="#65ff00" d="M561 228.5h1"/><path stroke="#68ff00" d="M572 228.5h1M262 236.5h1"/><path stroke="#6aff00" d="M260 236.5h1"/><path stroke="#6bff00" d="M235 231.5h1"/><path stroke="#6eff00" d="M220 226.5h1"/><path stroke="#70ff00" d="M360 228.5h1M249 234.5h1"/><path stroke="#74ff00" d="M276 228.5h1"/><path stroke="#78ff00" d="M267 238.5h1"/><path stroke="#79ff00" d="M259 228.5h1"/><path stroke="#7dff00" d="M247 228.5h1"/><path stroke="#7fff00" d="M248 234.5h1M264 237.5h1"/><path stroke="#81ff00" d="M129 228.5h1M188 228.5h1"/><path stroke="#85ff00" d="M391 228.5h1"/><path stroke="#88ff00" d="M304 228.5h1"/><path stroke="#89ff00" d="M324 228.5h1"/><path stroke="#8dff00" d="M363 228.5h1"/><path stroke="#95ff00" d="M210 224.5h1"/><path stroke="#9dff00" d="M609 228.5h1"/><path stroke="#a3ff00" d="M221 228.5h1M271 238.5h1"/><path stroke="#abff00" d="M265 237.5h1"/><path stroke="#acff00" d="M527 228.5h1"/><path stroke="#b2ff00" d="M545 228.5h1"/><path stroke="#b4ff00" d="M489 228.5h1"/><path stroke="#b8ff00" d="M337 228.5h1"/><path stroke="#cdff00" d="M205 222.5h1"/><path stroke="#ceff00" d="M230 229.5h1"/><path stroke="#d2ff00" d="M263 237.5h1"/><path stroke="#d6ff00" d="M190 216.5h1"/><path stroke="#deff00" d="M269 238.5h1"/><path stroke="#e2ff00" d="M253 235.5h1"/><path stroke="#e4ff00" d="M247 234.5h1"/><path stroke="#eeff00" d="M259 236.5h1"/><path stroke="#fbff00" d="M234 231.5h1"/><path stroke="#fdff00" d="M246 234.5h1"/><path stroke="#ff0204" d="M219 227.5h1"/><path stroke="#ff0800" d="M240 232.5h1"/><path stroke="#ff0b15" d="M267 237.5h1"/><path stroke="#ff0b17" d="M223 228.5h1"/><path stroke="#ff0d00" d="M266 237.5h1"/><path stroke="#ff1000" d="M218 226.5h1"/><path stroke="#ff1428" d="M257 236.5h1"/><path stroke="#ff1500" d="M256 236.5h1"/><path stroke="#ff152a" d="M217 226.5h1"/><path stroke="#ff1700" d="M222 228.5h1"/><path stroke="#ff1b37" d="M216 226.5h1"/><path stroke="#ff1d00" d="M241 233.5h1"/><path stroke="#ff264c" d="M215 226.5h1"/><path stroke="#ff3061" d="M232 230.5h1"/><path stroke="#ff3400" d="M207 223.5h1M214 225.5h1"/><path stroke="#ff3871" d="M238 232.5h1"/><path stroke="#ff4000" d="M244 233.5h1"/><path stroke="#ff4300" d="M252 235.5h1"/><path stroke="#ff4700" d="M188 216.5h1"/><path stroke="#ff4890" d="M239 232.5h1"/><path stroke="#ff4a95" d="M228 229.5h1M242 233.5h1"/><path stroke="#ff4d99" d="M224 228.5h1"/><path stroke="#ff52a4" d="M229 230.5h1"/><path stroke="#ff5300" d="M245 234.5h1"/><path stroke="#ff5500" d="M255 235.5h1"/><path stroke="#ff59b3" d="M225 228.5h1"/><path stroke="#ff5b00" d="M258 236.5h1"/><path stroke="#ff5fbf" d="M237 232.5h1"/><path stroke="#ff6300" d="M268 237.5h1"/><path stroke="#ff6900" d="M203 221.5h1"/><path stroke="#ff69d3" d="M220 227.5h1"/><path stroke="#ff6b00" d="M189 216.5h1"/><path stroke="#ff6edc" d="M221 227.5h1M226 229.5h2M230 230.5h2"/><path stroke="#ff7400" d="M251 235.5h1"/><path stroke="#ff7900" d="M209 224.5h1"/><path stroke="#ff8000" d="M208 223.5h1"/><path stroke="#ff9900" d="M250 234.5h1"/><path stroke="#ffa100" d="M212 225.5h1M243 233.5h1"/><path stroke="#ffac00" d="M236 231.5h1"/><path stroke="#ffad00" d="M206 222.5h1"/><path stroke="#ffd000" d="M201 220.5h1"/><path stroke="#ffda00" d="M226 228.5h1"/><path stroke="#ffdf00" d="M270 238.5h1"/><path stroke="#ffe100" d="M213 225.5h1"/><path stroke="#ffe400" d="M233 231.5h1"/><path stroke="#ffe800" d="M187 215.5h1"/><path stroke="#ffeb00" d="M204 221.5h1M254 235.5h1"/></g>
<rect x="57" y="80" width="24" height="12" fill="#000"/>
<rect x="117" y="80" width="24" height="12" fill="#000"/>
<rect x="177" y="80" width="24" height="12" fill="#000"/>
<rect x="237" y="80" width="24" height="12" fill="#000"/>
<rect x="297" y="80" width="24" height="12" fill="#000"/>
<rect x="357" y="80" width="24" height="12" fill="#000"/>
<rect x="417" y="80" width="24" height="12" fill="#000"/>
<rect x="477" y="80" width="24" height="12" fill="#000"/>
<rect x="537" y="80" width="24" height="12" fill="#000"/>
<rect x="597" y="80" width="24" height="12" fill="#000"/>
<rect x="20" y="370" width="600" height="1" fill="#999"/>
<rect x="20" y="380" width="600" height="1" fill="#999"/>
<rect x="20" y="390" width="600" height="1" fill="#999"/>
<rect x="19" y="195" width="1" height="70" fill="#999"/>
<path stroke="#0ff" stroke-width="1" fill="none" d="M20.5 392V400M21.5 392V400M22.5 392V400M23.5 393V400M24.5 395V400M25.5 393V400M26.5 395V400M27.5 397V400M28.5 396V400M29.5 398V400M30.5 398V400M31.5 399V400M32.5 398V400M33.5 397V400M34.5 399V400M35.5 397V400M36.5 398V400M37.5 398V400M38.5 398V400M39.5 398V400M40.5 398V400M41.5 398V400M42.5 399V400M43.5 398V400M44.5 399V400M45.5 398V400M46.5 398V400M47.5 399V400M48.5 397V400M49.5 397V400M50.5 398V400M51.5 399V400M52.5 398V400M53.5 399V400M54.5 399V400M55.5 399V400M56.5 398V400M57.5 399V400M58.5 399V400M59.5 398V400M60.5 398V400M61.5 397V400M62.5 398V400M63.5 397V400M64.5 398V400M65.5 398V400M66.5 398V400M67.5 398V400M68.5 399V400M69.5 398V400M70.5 397V400M71.5 398V400M72.5 397V400M73.5 398V400M74.5 396V400M75.5 397V400M76.5 396V400M77.5 398V400M78.5 396V400M79.5 398V400M80.5 396V400M81.5 396V400M82.5 396V400M83.5 393V400M84.5 393V400M85.5 394V400M86.5 393V400M87.5 393V400M88.5 392V400M89.5 392V400M90.5 393V400M91.5 392V400M92.5 392V400M93.5 396V400M94.5 392V400M95.5 392V400M96.5 392V400M97.5 393V400M98.5 392V400M99.5 392V400M100.5 393V400M101.5 392V400M102.5 396V400M103.5 395V400M104.5 393V400M105.5 394V400M106.5 392V400M107.5 392V400M108.5 392V400M109.5 393V400M110.5 394V400M111.5 393V400M113.5 392V400M114.5 392V400M115.5 392V400M116.5 392V400M117.5 393V400M118.5 393V400M119.5 392V400M120.5 392V400M121.5 392V400M122.5 392V400M123.5 392V400M124.5 393V400M125.5 392V400M126.5 392V400M127.5 392V400M128.5 392V400M129.5 392V400M130.5 393V400M131.5 392V400M132.5 393V400M133.5 392V400M134.5 392V400M135.5 392V400M136.5 394V400M137.5 392V400M138.5 392V400M139.5 394V400M140.5 392V400M141.5 395V400M142.5 392V400M143.5 393V400M144.5 394V400M145.5 392V400M146.5 396V400M147.5 393V400M148.5 395V400M149.5 392V400M150.5 392V400M151.5 392V400M152.5 392V400M153.5 392V400M154.5 392V400M155.5 393V400M156.5 393V400M157.5 392V400M158.5 392V400M159.5 393V400M160.5 393V400M161.5 392V400M162.5 392V400M163.5 392V400M164.5 392V400M165.5 392V400M166.5 392V400M167.5 396V400M168.5 392V400M169.5 395V400M170.5 392V400M171.5 392V400M172.5 393V400M173.5 392V400M174.5 392V400M175.5 392V400M176.5 392V400M177.5 392V400M178.5 393V400M179.5 392V400M182.5 392V400M183.5 392V400M184.5 393V400M185.5 392V400M191.5 392V400M192.5 392V400M193.5 392V400M194.5 393V400M196.5 392V400M199.5 393V400M232.5 392V400M255.5 392V400M256.5 392V400M257.5 392V400M259.5 395V400M260.5 395V400M275.5 393V400M277.5 392V400M278.5 394V400M279.5 392V400M280.5 392V400M281.5 392V400M282.5 392V400M283.5 392V400M284.5 392V400M285.5 392V400M286.5 394V400M287.5 392V400M288.5 393V400M289.5 392V400M290.5 392V400M291.5 392V400M292.5 392V400M293.5 393V400M294.5 392V400M295.5 392V400M296.5 393V400M297.5 392V400M298.5 392V400M299.5 392V400M300.5 393V400M301.5 392V400M302.5 392V400M303.5 396V400M304.5 392V400M305.5 392V400M306.5 392V400M307.5 392V400M308.5 392V400M309.5 392V400M310.5 395V400M311.5 392V400M312.5 392V400M313.5 392V400M314.5 393V400M316.5 395V400M317.5 392V400M318.5 392V400M319.5 392V400M320.5 393V400M321.5 392V400M322.5 392V400M323.5 395V400M324.5 394V400M325.5 393V400M326.5 393V400M327.5 392V400M328.5 395V400M329.5 395V400M331.5 393V400M332.5 392V400M333.5 392V400M334.5 393V400M335.5 392V400M336.5 393V400M337.5 392V400M338.5 392V400M339.5 392V400M340.5 392V400M341.5 392V400M342.5 392V400M343.5 393V400M344.5 392V400M345.5 392V400M347.5 393V400M348.5 392V400M349.5 394V400M350.5 392V400M351.5 394V400M352.5 392V400M353.5 393V400M354.5 392V400M355.5 392V400M356.5 392V400M357.5 394V400M358.5 392V400M359.5 394V400M360.5 392V400M361.5 392V400M362.5 392V400M363.5 395V400M364.5 392V400M365.5 392V400M366.5 392V400M367.5 393V400M368.5 394V400M369.5 392V400M370.5 392V400M371.5 392V400M372.5 394V400M373.5 393V400M374.5 392V400M375.5 392V400M376.5 394V400M377.5 392V400M378.5 392V400M379.5 392V400M380.5 393V400M381.5 392V400M382.5 392V400M383.5 392V400M384.5 395V400M385.5 392V400M386.5 393V400M387.5 391V400M388.5 392V400M389.5 393V400M390.5 392V400M391.5 396V400M392.5 391V400M393.5 391V400M394.5 391V400M395.5 391V400M396.5 392V400M397.5 391V400M398.5 392V400M399.5 391V400M400.5 391V400M401.5 393V400M402.5 391V400M403.5 391V400M404.5 391V400M405.5 392V400M406.5 391V400M407.5 391V400M408.5 391V400M409.5 391V400M410.5 391V400M411.5 392V400M412.5 391V400M413.5 394V400M414.5 392V400M415.5 394V400M416.5 391V400M417.5 391V400M418.5 393V400M419.5 391V400M420.5 393V400M421.5 391V400M422.5 392V400M423.5 392V400M424.5 391V400M425.5 391V400M426.5 391V400M427.5 391V400M429.5 391V400M430.5 395V400M431.5 391V400M432.5 393V400M433.5 394V400M434.5 393V400M435.5 393V400M436.5 391V400M437.5 392V400M438.5 391V400M439.5 391V400M441.5 391V400M442.5 391V400M443.5 391V400M444.5 395V400M445.5 391V400M446.5 396V400M447.5 393V400M448.5 393V400M449.5 391V400M450.5 396V400M451.5 392V400M452.5 392V400M453.5 391V400M454.5 393V400M455.5 391V400M456.5 391V400M457.5 393V400M458.5 392V400M459.5 393V400M460.5 393V400M461.5 392V400M462.5 391V400M463.5 391V400M465.5 396V400M466.5 391V400M467.5 396V400M468.5 392V400M469.5 392V400M471.5 391V400M472.5 393V400M473.5 391V400M474.5 391V400M475.5 392V400M476.5 391V400M477.5 391V400M478.5 391V400M480.5 395V400M481.5 392V400M482.5 393V400M483.5 392V400M484.5 395V400M485.5 391V400M489.5 392V400M490.5 393V400M491.5 392V400M492.5 391V400M493.5 392V400M494.5 391V400M495.5 391V400M497.5 391V400M498.5 393V400M499.5 391V400M500.5 391V400M502.5 391V400M503.5 393V400M504.5 391V400M506.5 391V400M507.5 391V400M508.5 391V400M509.5 391V400M510.5 393V400M511.5 391V400M512.5 391V400M513.5 391V400M514.5 394V400M515.5 393V400M516.5 391V400M517.5 395V400M518.5 394V400M519.5 391V400M520.5 391V400M521.5 391V400M522.5 393V400M524.5 393V400M525.5 391V400M526.5 391V400M527.5 394V400M528.5 391V400M529.5 391V400M531.5 391V400M532.5 393V400M533.5 393V400M534.5 393V400M535.5 391V400M536.5 393V400M537.5 391V400M538.5 391V400M539.5 392V400M540.5 393V400M541.5 391V400M542.5 394V400M544.5 391V400M545.5 392V400M546.5 391V400M547.5 393V400M548.5 394V400M549.5 391V400M550.5 394V400M552.5 391V400M553.5 391V400M554.5 393V400M555.5 393V400M556.5 393V400M557.5 391V400M558.5 391V400M559.5 391V400M560.5 391V400M561.5 391V400M562.5 392V400M563.5 391V400M564.5 393V400M565.5 392V400M566.5 391V400M567.5 391V400M568.5 393V400M572.5 393V400M573.5 392V400M574.5 392V400M575.5 393V400M576.5 391V400M577.5 392V400M578.5 391V400M579.5 391V400M580.5 393V400M581.5 391V400M582.5 392V400M583.5 392V400M584.5 392V400M585.5 391V400M586.5 391V400M588.5 391V400M589.5 391V400M590.5 395V400M591.5 391V400M592.5 394V400M593.5 391V400M595.5 391V400M596.5 395V400M597.5 395V400M598.5 391V400M599.5 393V400M600.5 391V400M601.5 392V400M602.5 391V400M603.5 392V400M604.5 393V400M606.5 391V400M607.5 392V400M608.5 392V400M609.5 391V400M610.5 391V400M611.5 391V400M612.5 392V400M616.5 391V400M617.5 391V400M618.5 391V400"/>
<path stroke="#ff0" stroke-width="1" fill="none" d="M112.5 390V400M180.5 389V400M181.5 389V400M186.5 390V400M187.5 389V400M188.5 388V400M189.5 387V400M190.5 387V400M195.5 390V400M197.5 390V400M198.5 390V400M200.5 389V400M201.5 388V400M202.5 388V400M203.5 386V400M204.5 386V400M205.5 385V400M206.5 385V400M207.5 386V400M208.5 387V400M209.5 388V400M210.5 388V400M211.5 389V400M212.5 388V400M213.5 387V400M214.5 384V400M215.5 381V400M216.5 380V400M217.5 379V400M218.5 379V400M219.5 380V400M220.5 380V400M221.5 379V400M222.5 379V400M223.5 378V400M224.5 378V400M225.5 378V400M226.5 379V400M227.5 380V400M228.5 382V400M229.5 383V400M230.5 385V400M231.5 386V400M233.5 388V400M234.5 387V400M235.5 385V400M236.5 384V400M237.5 383V400M238.5 382V400M239.5 383V400M240.5 385V400M241.5 386V400M242.5 388V400M243.5 387V400M244.5 386V400M245.5 387V400M246.5 385V400M247.5 385V400M248.5 385V400M249.5 387V400M250.5 388V400M251.5 387V400M252.5 388V400M253.5 389V400M254.5 390V400M258.5 390V400M261.5 389V400M262.5 387V400M263.5 386V400M264.5 386V400M265.5 386V400M266.5 385V400M267.5 384V400M268.5 386V400M269.5 387V400M270.5 387V400M271.5 387V400M272.5 388V400M273.5 387V400M274.5 386V400M276.5 390V400M315.5 390V400M330.5 390V400M346.5 390V400M428.5 390V400M440.5 390V400M464.5 390V400M470.5 390V400M479.5 390V400M486.5 390V400M487.5 390V400M488.5 390V400M496.5 390V400M501.5 390V400M505.5 390V400M523.5 390V400M530.5 390V400M543.5 390V400M551.5 390V400M569.5 390V400M570.5 390V400M571.5 390V400M587.5 390V400M594.5 390V400M605.5 390V400M613.5 390V400M614.5 390V400M615.5 390V400M619.5 390V400"/>
<path stroke="#ff0" stroke-width="1" fill="none" d="M16 90.5H18M624 90.5H626M16 100.5H18M624 100.5H626M16 110.5H18M624 110.5H626M16 120.5H18M624 120.5H626M14 130.5H18M624 130.5H628M16 140.5H18M624 140.5H626M16 150.5H18M624 150.5H626M16 160.5H18M624 160.5H626M16 170.5H18M624 170.5H626M14 180.5H18M624 180.5H628M16 190.5H18M624 190.5H626M16 200.5H18M624 200.5H626M16 210.5H18M624 210.5H626M16 220.5H18M624 220.5H626M14 230.5H18M624 230.5H628M16 240.5H18M624 240.5H626M16 250.5H18M624 250.5H626M16 260.5H18M624 260.5H626M16 270.5H18M624 270.5H626M14 280.5H18M624 280.5H628M16 290.5H18M624 290.5H626M16 300.5H18M624 300.5H626M16 310.5H18M624 310.5H626M16 320.5H18M624 320.5H626M14 330.5H18M624 330.5H628M16 340.5H18M624 340.5H626M16 350.5H18M624 350.5H626M16 360.5H18M624 360.5H626M16 370.5H18M624 370.5H626M14 380.5H18M624 380.5H628M16 390.5H18M624 390.5H626M80.5 92V95M140.5 92V95M200.5 92V95M260.5 92V95M320.5 92V95M380.5 92V95M440.5 92V95M500.5 92V95M560.5 92V95M620.5 92V95"/>
</svg>
<div id="tx">
<div class="t" style="left:179px;top:4px;">Observer           : Takanori Kawachi</div>
<div class="t" style="left:179px;top:16px;">Receiving Location : Ogaki, Gifu, JAPAN (136.60E, 35.35N)</div>
<div class="t" style="left:179px;top:28px;">Receiver           : R820T2(RTL-SDR) SDR-Sharp 53.1000MHz</div>
<div class="t" style="left:179px;top:40px;">Receiving antenna  : 2el-HB9CV Vertical (el. E-W)</div>
<div class="t" style="left:9px;top:19px;">2510150210.png</div>
<div class="t" style="left:9px;top:39px;">25.10.15 02:10</div>
<div class="t" style="left:124px;top:24px;">meteor</div>
<div class="t" style="left:139px;top:39px;">32</div>
<div class="t" style="left:0px;top:74px;">kHz</div>
<div class="f" style="left:0px;top:123px">1.1</div>
<div class="f" style="left:0px;top:173px">1.0</div>
<div class="f" style="left:0px;top:223px">0.9</div>
<div class="f" style="left:0px;top:273px">0.8</div>
<div class="f" style="left:0px;top:323px">0.7</div>
<div class="f" style="left:0px;top:373px">0.6</div>
<div class="t" style="left:57px;top:79px;">0211</div>
<div class="t" style="left:117px;top:79px;">0212</div>
<div class="t" style="left:177px;top:79px;">0213</div>
<div class="t" style="left:237px;top:79px;">0214</div>
<div class="t" style="left:297px;top:79px;">0215</div>
<div class="t" style="left:357px;top:79px;">0216</div>
<div class="t" style="left:417px;top:79px;">0217</div>
<div class="t" style="left:477px;top:79px;">0218</div>
<div class="t" style="left:537px;top:79px;">0219</div>
<div class="t" style="left:597px;top:79px;">0220</div>
<div class="g" style="left:10px;top:0px">H R O F F T</div>
<div class="v" style="left:127px;top:3px">1.0.0</div>
</div>
</div></body></html>
